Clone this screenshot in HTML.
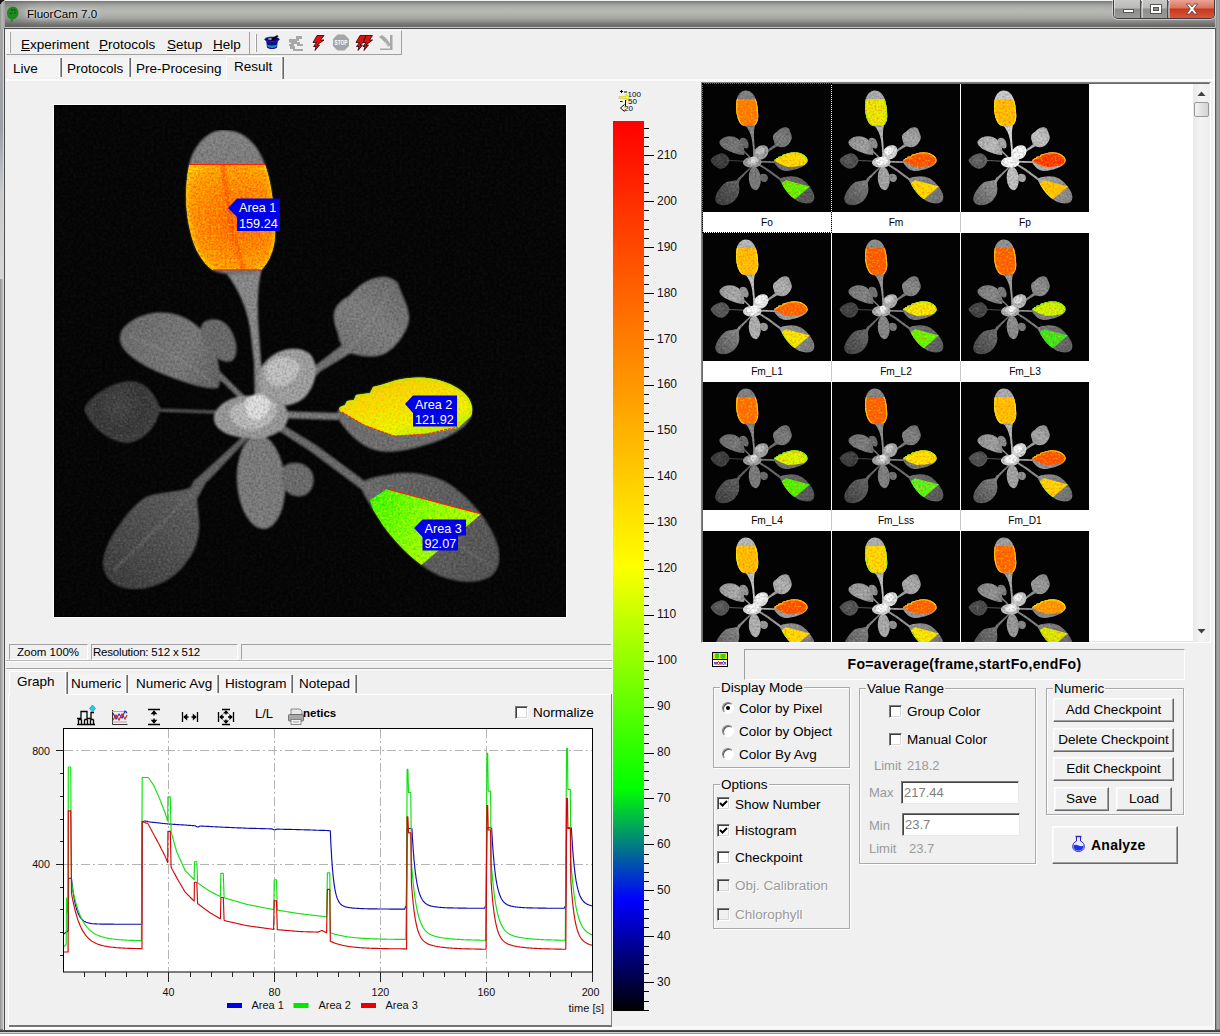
<!DOCTYPE html><html><head><meta charset="utf-8"><title>FluorCam 7.0</title><style>
*{box-sizing:border-box;margin:0;padding:0}
html,body{width:1220px;height:1036px;overflow:hidden;background:#f0f0f0}
body{font-family:"Liberation Sans",sans-serif;font-size:13px;color:#000;position:relative}
.a{position:absolute}
.t{position:absolute;white-space:nowrap;line-height:1}
u{text-decoration:underline;text-underline-offset:1px}
.grp{position:absolute;border:1px solid #a9a9a9;box-shadow:1px 1px 0 #fff, inset 1px 1px 0 #fff}
.leg{position:absolute;background:#f0f0f0;white-space:nowrap;line-height:1;padding:0 1px}
.btn{position:absolute;background:#f0f0f0;border:1px solid;border-color:#fff #696969 #696969 #fff;box-shadow:inset -1px -1px 0 #a0a0a0, inset 1px 1px 0 #f8f8f8;text-align:center;white-space:nowrap}
.cb{position:absolute;width:13px;height:13px;background:#fff;border:1px solid;border-color:#7a7a7a #fff #fff #7a7a7a;box-shadow:inset 1px 1px 0 #404040, inset -1px -1px 0 #d8d8d8}
.cb.dis{background:#f0f0f0}
.rb{position:absolute;width:12px;height:12px;border-radius:50%;background:#fff;border:1px solid;border-color:#808080 #fff #fff #808080;box-shadow:inset 1px 1px 0 #555}
.inp{position:absolute;background:#fff;border:1px solid;border-color:#7a7a7a #e8e8e8 #e8e8e8 #7a7a7a;box-shadow:inset 1px 1px 0 #404040}
.gray{color:#9a9a9a}
.sunk{position:absolute;border:1px solid;border-color:#a0a0a0 #fff #fff #a0a0a0}
.tabdiv{position:absolute;width:3px;background:linear-gradient(90deg,#fff 0 1px,#a0a0a0 1px 2px,#696969 2px 3px)}
</style></head><body>

<div class="a" style="left:0;top:0;width:1220px;height:1036px;background:#a3a5a4"></div>
<div class="a" style="left:0;top:0;width:1220px;height:29px;background:linear-gradient(180deg,#f6f6f6 0,#f0f0f0 .8px,#747573 1.200px,#8c8d8a 2.500px,#a2a49f 5px,#b0b2ad 8px,#b6b8b3 11px,#b0b1ad 15px,#a6a7a4 18px,#8e8f8d 21.500px,#777876 24px,#6a6b69 26.500px,#c4c4c4 27px,#c4c4c4 28px,#404040 28.200px)"></div>
<div class="a" style="left:0;top:1px;width:1220px;height:26px;background:linear-gradient(90deg,rgba(60,60,60,.28) 0,rgba(90,90,90,.0) 40px,rgba(255,255,255,0) 1100px,rgba(60,60,60,.12) 1220px)"></div>
<div class="a" style="left:0;top:0;width:5px;height:1034px;background:linear-gradient(90deg,#8d8f8e,#b9bbba 2px,#a2a4a3 4px)"></div>
<div class="a" style="left:1215px;top:0;width:5px;height:1034px;background:linear-gradient(90deg,#dcdcdc 0,#8a8c8b 1px,#a8aaa9 3px,#8e908f 5px)"></div>
<div class="a" style="left:0;top:1029px;width:1220px;height:7px;background:linear-gradient(180deg,#8a8a8a 0,#3c3c3c 2px,#3c3c3c 2.500px,#d4d4d4 3px,#d4d4d4 3.800px,#8c8e8d 4px,#9a9c9b 5px,#fff 5.200px,#fff 7px)"></div>
<div class="a" style="left:4px;top:28px;width:1212px;height:1003px;background:#f0f0f0;border:1px solid #4a4a4a;border-right-color:#5a5a5a;border-bottom-color:#4a4a4a"></div>
<div class="a" style="left:0;top:0;width:4px;height:4px;background:radial-gradient(circle at 6px 6px,transparent 5px,#111 6px)"></div>

<div class="a" style="left:1213px;top:29px;width:2px;height:1000px;background:#fafafa"></div><div class="a" style="left:612px;top:1026px;width:603px;height:3px;background:#f9f9f9"></div>
<div class="a" style="left:0;top:29px;width:3px;height:250px;background:linear-gradient(180deg,#a4a5a4 0,#9da1a6 100px,#b4b8bc 135px,#c6c8ca 160px,#d6d6d6 249px)"></div><div class="a" style="left:3px;top:29px;width:1px;height:1001px;background:#d8dadc"></div>
<div class="t" style="left:27px;top:8px;font-size:11.600px;color:#000;text-shadow:0 0 6px rgba(255,255,255,.9),0 0 3px rgba(255,255,255,.7)">FluorCam 7.0</div>
<svg class="a" style="left:6px;top:6px" width="14" height="17" viewBox="0 0 14 17"><path d="M7 0.5C3 1 0.8 4 1 8c.2 3 2 5 4 5.5L4.5 16l2-.3.5-2.2c3-.5 5.5-3 5.5-7C12.500 3 10 .8 7 .5z" fill="#1f8a1f"/><path d="M5 3l2 2M8 3l1.500 2M4 7l2 1M8 7.500l2-1" stroke="#0c5a0c" stroke-width="1.200" fill="none"/></svg>

<div class="a" style="left:1113px;top:0;width:102px;height:19px;border:1px solid #3c3c3c;border-top:none;border-radius:0 0 5px 5px;overflow:hidden;box-shadow:0 0 0 1px rgba(255,255,255,.45)">
 <div class="a" style="left:0;top:0;width:27px;height:18px;background:linear-gradient(180deg,#c9cac8 0,#b9bab8 8px,#8d8e8c 9px,#9a9b99 18px);border-right:1px solid #4a4a4a;box-shadow:inset 1px 0 0 rgba(255,255,255,.5)"></div>
 <div class="a" style="left:28px;top:0;width:26px;height:18px;background:linear-gradient(180deg,#c9cac8 0,#b9bab8 8px,#8d8e8c 9px,#9a9b99 18px);border-right:1px solid #4a4a4a;box-shadow:inset 1px 0 0 rgba(255,255,255,.5)"></div>
 <div class="a" style="left:55px;top:0;width:46px;height:18px;background:linear-gradient(180deg,#e9a392 0,#d9725c 8px,#c8361b 9px,#d8563a 18px);box-shadow:inset 1px 0 0 rgba(255,255,255,.4)"></div>
 <div class="a" style="left:9px;top:9px;width:11px;height:4px;background:#fff;border:1px solid #555"></div>
 <div class="a" style="left:36px;top:4px;width:12px;height:10px;background:#fff;border:1px solid #555"></div>
 <div class="a" style="left:39px;top:7px;width:6px;height:4px;background:#8d8e8c;border:1px solid #555"></div>
 <svg class="a" style="left:71px;top:3px" width="14" height="12" viewBox="0 0 14 12"><path d="M1.500 1h3.200L7 4l2.300-3h3.200L8.700 6l3.800 5H9.300L7 8l-2.300 3H1.500L5.300 6z" fill="#fff" stroke="#5a3a3a" stroke-width=".8"/></svg>
</div>


<div class="a" style="left:6px;top:30px;width:396px;height:25px;border:1px solid;border-color:#f8f8f8 #a0a0a0 #a0a0a0 #f8f8f8"></div>
<div class="a" style="left:249px;top:32px;width:1px;height:22px;background:#a0a0a0"></div>
<div class="a" style="left:9px;top:32px;width:2px;height:21px;border-left:1px solid #fff;border-right:1px solid #a0a0a0"></div>
<div class="a" style="left:255px;top:34px;width:2px;height:18px;border-left:1px solid #fff;border-right:1px solid #a0a0a0"></div>
<div class="t" style="left:21px;top:38px;font-size:13.500px"><u>E</u>xperiment</div>
<div class="t" style="left:99px;top:38px;font-size:13.500px"><u>P</u>rotocols</div>
<div class="t" style="left:167px;top:38px;font-size:13.500px"><u>S</u>etup</div>
<div class="t" style="left:213px;top:38px;font-size:13.500px"><u>H</u>elp</div>

<svg class="a" style="left:260px;top:32px" width="140" height="22" viewBox="260 31 140 22">
 <!-- blue magic hat -->
 <g>
  <path d="M266,38.500c3,-1.500 9,-1.500 12,0l-1,8c-2.500,2 -7.500,2 -10,0z" fill="#101080"/>
  <ellipse cx="272" cy="38.300" rx="7.300" ry="2.300" fill="#0a0a70" stroke="#2828b0" stroke-width=".8"/>
  <path d="M267.200,43.500c2.500,1.500 7,1.500 9.600,0l-.3,2.300c-2.500,1.500 -6.500,1.500 -9,0z" fill="#2090d0"/>
  <path d="M272,38.500l6,-4" stroke="#000" stroke-width="1.600"/>
  <path d="M277,34l2,-.8" stroke="#fff" stroke-width="1"/>
  <ellipse cx="270" cy="38" rx="2" ry=".8" fill="#fff" opacity=".8"/>
 </g>
 <!-- gray gear/robot -->
 <g fill="#a8a8a8">
  <path d="M296,35h6v3h-3v2h-3z"/>
  <path d="M289,38h8v3h3v2h-6v2h-5v-2h2v-2h-2z"/>
  <path d="M290,45h5v3h8v2h-10v-2h-3z"/>
  <path d="M297,43h6v2h-6z"/>
  <circle cx="291.500" cy="40" r="2.200"/>
 </g>
 <!-- red lightning -->
 <g>
  <path d="M317,34.500h7l-3.500,4.500h3.500l-7,5h2.500l-4.500,5.500l1,-4h-2.500l3,-4h-3.500z" fill="#e01010" stroke="#200000" stroke-width=".8"/>
 </g>
 <!-- stop sign -->
 <g>
  <path d="M337.500,33.500h7l4.500,4.500v7l-4.500,4.500h-7l-4.500,-4.500v-7z" fill="#a6a6a6"/>
  <text x="341" y="44.300" font-family="Liberation Sans, sans-serif" font-size="7" font-weight="bold" fill="#fff" text-anchor="middle" textLength="13" lengthAdjust="spacingAndGlyphs">STOP</text>
 </g>
 <!-- double lightning -->
 <g>
  <path d="M360,34.500h6.500l-3,4.500h3l-6.500,5h2.500l-4.500,5.500l1,-4h-2.500l3,-4h-3.500z" fill="#e01010" stroke="#200000" stroke-width=".8"/>
  <path d="M366.500,34.500h6l-3,4.500h3l-6.500,5h2.500l-4.500,5.500l1,-4h-2l3,-4h-3z" fill="#e01010" stroke="#200000" stroke-width=".8"/>
 </g>
 <!-- gray tool -->
 <g fill="#a8a8a8">
  <path d="M379,36l3,-2l4,3l-2,3z"/>
  <path d="M383,39l3,-2l5,7l-3,2z"/>
  <path d="M390,34h2.500v15h-2.500z"/>
  <path d="M380,47.500h12v1.500h-12z"/>
  <path d="M385,41l4,5" stroke="#d8d8d8" stroke-width="1"/>
 </g>
</svg>


<div class="a" style="left:6px;top:79px;width:1208px;height:2px;background:#fbfbfb"></div>
<div class="a" style="left:226px;top:56px;width:57px;height:24px;background:#f0f0f0;border-left:1px solid #fff;border-top:1px solid #fff"></div>
<div class="tabdiv" style="left:281px;top:57px;height:22px"></div>
<div class="a" style="left:8px;top:58px;width:218px;height:20px;background:#f4f4f4"></div>
<div class="tabdiv" style="left:59px;top:58px;height:19px"></div>
<div class="tabdiv" style="left:128px;top:58px;height:19px"></div>
<div class="t" style="left:13px;top:62px;font-size:13.500px">Live</div>
<div class="t" style="left:67px;top:62px;font-size:13.500px">Protocols</div>
<div class="t" style="left:136px;top:62px;font-size:13.500px">Pre-Procesing</div>
<div class="t" style="left:234px;top:60px;font-size:13.500px">Result</div>

<svg class="a" style="left:0;top:0" width="0" height="0">
<defs>
<filter id="soft" x="-5%" y="-5%" width="110%" height="110%"><feGaussianBlur stdDeviation="1.1"/></filter>
<filter id="grain" x="0" y="0" width="100%" height="100%" color-interpolation-filters="sRGB">
  <feTurbulence type="fractalNoise" baseFrequency="0.42" numOctaves="2" seed="3" result="n"/>
  <feColorMatrix in="n" type="matrix" values="0 0 0 0 0  0 0 0 0 0  0 0 0 0 0  0.45 0 0 0 -0.17" result="dark0"/>
  <feComposite in="dark0" in2="SourceAlpha" operator="in" result="dark"/>
  <feColorMatrix in="n" type="matrix" values="0 0 0 0 1  0 0 0 0 1  0 0 0 0 1  0 0.26 0 0 -0.105" result="lite0"/>
  <feComposite in="lite0" in2="SourceAlpha" operator="in" result="lite"/>
  <feMerge><feMergeNode in="SourceGraphic"/><feMergeNode in="dark"/><feMergeNode in="lite"/></feMerge>
</filter>
<filter id="gc1" x="0" y="0" width="100%" height="100%" color-interpolation-filters="sRGB">
  <feTurbulence type="fractalNoise" baseFrequency="0.45" numOctaves="2" seed="5" result="n"/>
  <feColorMatrix in="n" type="matrix" values="0 0 0 0 1.000  0 0 0 0 0.188  0 0 0 0 0.000  1.5 0 0 0 -0.6" result="d0"/>
  <feComposite in="d0" in2="SourceAlpha" operator="in" result="d"/>
  <feColorMatrix in="n" type="matrix" values="0 0 0 0 1.000  0 0 0 0 0.847  0 0 0 0 0.000  0 1.5 0 0 -0.62" result="l0"/>
  <feComposite in="l0" in2="SourceAlpha" operator="in" result="l"/>
  <feMerge><feMergeNode in="SourceGraphic"/><feMergeNode in="d"/><feMergeNode in="l"/></feMerge>
</filter>
<filter id="gc2" x="0" y="0" width="100%" height="100%" color-interpolation-filters="sRGB">
  <feTurbulence type="fractalNoise" baseFrequency="0.45" numOctaves="2" seed="6" result="n"/>
  <feColorMatrix in="n" type="matrix" values="0 0 0 0 1.000  0 0 0 0 0.627  0 0 0 0 0.000  1.5 0 0 0 -0.6" result="d0"/>
  <feComposite in="d0" in2="SourceAlpha" operator="in" result="d"/>
  <feColorMatrix in="n" type="matrix" values="0 0 0 0 0.784  0 0 0 0 1.000  0 0 0 0 0.000  0 1.5 0 0 -0.62" result="l0"/>
  <feComposite in="l0" in2="SourceAlpha" operator="in" result="l"/>
  <feMerge><feMergeNode in="SourceGraphic"/><feMergeNode in="d"/><feMergeNode in="l"/></feMerge>
</filter>
<filter id="gc3" x="0" y="0" width="100%" height="100%" color-interpolation-filters="sRGB">
  <feTurbulence type="fractalNoise" baseFrequency="0.45" numOctaves="2" seed="8" result="n"/>
  <feColorMatrix in="n" type="matrix" values="0 0 0 0 0.063  0 0 0 0 0.878  0 0 0 0 0.000  1.5 0 0 0 -0.6" result="d0"/>
  <feComposite in="d0" in2="SourceAlpha" operator="in" result="d"/>
  <feColorMatrix in="n" type="matrix" values="0 0 0 0 0.941  0 0 0 0 1.000  0 0 0 0 0.000  0 1.5 0 0 -0.62" result="l0"/>
  <feComposite in="l0" in2="SourceAlpha" operator="in" result="l"/>
  <feMerge><feMergeNode in="SourceGraphic"/><feMergeNode in="d"/><feMergeNode in="l"/></feMerge>
</filter>
<filter id="grainbg" x="0" y="0" width="100%" height="100%" color-interpolation-filters="sRGB">
  <feTurbulence type="fractalNoise" baseFrequency="0.35" numOctaves="2" seed="11" result="n"/>
  <feColorMatrix in="n" type="matrix" values="0 0 0 0 1  0 0 0 0 1  0 0 0 0 1  0 0.07 0 0 -0.026" result="lite"/>
  <feMerge><feMergeNode in="SourceGraphic"/><feMergeNode in="lite"/></feMerge>
</filter>
<path id="pL1" d="M170,26 C152,26 138,44 135,62 C131,82 131,106 136,126 C140,146 150,161 160,167 C175,172 195,172 206,167 C216,158 222,142 221,126 C220,100 217,76 210,58 C203,40 190,26 170,26 Z"/>
<path id="pA2" d="M282,311 L286,303 L291,301 L293,297 L300,296 L302,291 L309,290 L316,289 L319,283 L327,281 L341,276.500 C349,274.500 357,273.400 366,273.400 C390,274 416,286 418,303 C420,318 406,328 386,336 C366,344 340,350 325,347 C305,343 290,325 282,311 Z"/>
<path id="pA3" d="M305,380 C312,375 322,372 334,371 C350,367 372,368 392,378 C412,390 432,412 442,436 C448,452 446,466 436,473 C424,480 404,479 386,472 C364,462 342,440 328,420 C318,404 310,392 305,380 Z"/>
<clipPath id="cL1"><use href="#pL1"/></clipPath>
<clipPath id="cA2"><use href="#pA2"/></clipPath>
<clipPath id="cA3"><use href="#pA3"/></clipPath>
<clipPath id="kA1" clip-path="url(#cL1)"><rect x="120" y="60.500" width="120" height="105.500"/></clipPath>
<clipPath id="kA2" clip-path="url(#cA2)"><path d="M270,262 L430,262 L430,300 L404,324 L372,330 L340,332 L310,321 L286,307 Z"/></clipPath>
<clipPath id="kA3" clip-path="url(#cA3)"><path d="M316,396 L333,385 L427,410 L365,463 L340,446 L326,430 Z"/></clipPath>
<radialGradient id="gA1" cx="0.52" cy="0.5" r="0.62" fx="0.55" fy="0.55">
  <stop offset="0" stop-color="#ff5c00"/><stop offset="0.5" stop-color="#ff8a00"/><stop offset="0.8" stop-color="#ffaa00"/><stop offset="1" stop-color="#f4e800"/>
</radialGradient>
<linearGradient id="gA2" x1="0.2" y1="0" x2="0.8" y2="1">
  <stop offset="0" stop-color="#ffb400"/><stop offset="0.4" stop-color="#ffd800"/><stop offset="0.75" stop-color="#f4f800"/><stop offset="1" stop-color="#88ff00"/>
</linearGradient>
<linearGradient id="gA3" x1="0" y1="0.2" x2="1" y2="0.6">
  <stop offset="0" stop-color="#30f800"/><stop offset="0.45" stop-color="#88ff00"/><stop offset="1" stop-color="#d8ff00"/>
</linearGradient>

<linearGradient id="gBL" gradientUnits="userSpaceOnUse" x1="60" y1="475" x2="140" y2="392"><stop offset="0" stop-color="#3d3d3d"/><stop offset=".5" stop-color="#4f4f4f"/><stop offset="1" stop-color="#5e5e5e"/></linearGradient>
<radialGradient id="gLL" gradientUnits="userSpaceOnUse" cx="66" cy="302" r="40"><stop offset="0" stop-color="#464646"/><stop offset=".6" stop-color="#373737"/><stop offset="1" stop-color="#404040"/></radialGradient>
<linearGradient id="gUL" gradientUnits="userSpaceOnUse" x1="70" y1="225" x2="165" y2="280"><stop offset="0" stop-color="#6d6d6d"/><stop offset=".6" stop-color="#7a7a7a"/><stop offset="1" stop-color="#616161"/></linearGradient>
<linearGradient id="gUR" gradientUnits="userSpaceOnUse" x1="290" y1="250" x2="345" y2="180"><stop offset="0" stop-color="#737373"/><stop offset=".5" stop-color="#7f7f7f"/><stop offset="1" stop-color="#6c6c6c"/></linearGradient>
<linearGradient id="gA3g" gradientUnits="userSpaceOnUse" x1="310" y1="380" x2="445" y2="470"><stop offset="0" stop-color="#6c6c6c"/><stop offset=".5" stop-color="#5f5f5f"/><stop offset="1" stop-color="#545454"/></linearGradient>
<linearGradient id="gL1g" gradientUnits="userSpaceOnUse" x1="170" y1="26" x2="185" y2="170"><stop offset="0" stop-color="#858585"/><stop offset="1" stop-color="#737373"/></linearGradient>
<symbol id="plant" viewBox="0 0 512 512">
 <g filter="url(#soft)">
  <!-- petioles -->
  <path d="M168,164 C182,180 192,200 196,224 L200,258 L201,302 L211,302 L207,258 L204.500,224 C203,200 203.500,180 208,164 Z" fill="#8a8a8a"/>
  <path d="M100,304.500 L198,307.500 L198,311 L100,307.500 Z" fill="#555"/>
  <path d="M140,377 L192,329.500 L195.500,333 L154,377 Z" fill="#606060"/>
  <path d="M222,297 L262,261 L288,241 L297,249 L267,267 L227,303 Z" fill="#727272"/>
  <path d="M222,307 L284,309 L284,316 L222,314 Z" fill="#7a7a7a"/>
  <path d="M226,319 L262,341 L312,378 L307,385 L256,347 L222,325 Z" fill="#6c6c6c"/>
  <path d="M150,252 L200,301 L196,305 L147,257 Z" fill="#707070"/>
  <!-- outer leaves -->
  <use href="#pL1" fill="url(#gL1g)"/>
  <path d="M68,226 C80,210 104,205 124,211 C142,217 156,232 162,250 C166,264 168,280 164,284 C154,286 134,280 114,272 C92,264 72,252 67,240 C65,235 66,230 68,226 Z" fill="url(#gUL)"/>
  <path d="M150,218 C160,212 172,216 178,228 C184,240 184,252 178,257 C170,260 160,254 152,242 C146,232 145,222 150,218 Z" fill="#6a6a6a"/>
  <path d="M280,209 C282,200 288,196 295,192 C304,182 314,174 327,173 C334,172 340,175 344,179 C347,190 354,200 355,211 C356,219 352,226 349,231 C344,240 338,245 332,249 C326,252 320,253 313,252.500 C306,252 300,250 296,249 L289,243 C286,238 284,234 284,230 C281,222 279,215 280,209 Z" fill="url(#gUR)"/>
  <path d="M30,305 C36,292 54,280 74,277 C90,276 100,288 106,304 C104,320 92,336 74,339 C54,338 36,322 30,305 Z" fill="url(#gLL)"/>
  <path d="M154,375 L143,395 C144,408 146,418 145,426 C144,440 139,450 133,457 C125,470 112,478 100,482 C88,486 74,487 62,481 C52,475 48,466 49,456 C52,440 60,428 66,420 C74,408 84,398 92,393 C105,388 124,388 136,384 L141,375 Z" fill="url(#gBL)"/>
  <ellipse cx="207" cy="378" rx="24" ry="47" fill="#7c7c7c" transform="rotate(-4 207 378)"/>
  <path d="M230,362 C238,356 252,358 258,368 C262,378 258,390 248,392 C238,394 230,388 228,378 C227,372 228,366 230,362 Z" fill="#6c6c6c"/>
  <use href="#pA2" fill="#707070"/>
  <use href="#pA3" fill="url(#gA3g)"/>
  <path d="M60,466 L138,390" stroke="#7a7a7a" stroke-width="2" opacity=".55" fill="none"/>
  <path d="M207,335 L207,420" stroke="#8c8c8c" stroke-width="1.600" opacity=".5" fill="none"/>
  <path d="M75,232 C110,245 140,262 162,282" stroke="#999" stroke-width="1.600" opacity=".5" fill="none"/>
  <path d="M288,252 C305,235 325,210 335,185" stroke="#9a9a9a" stroke-width="1.600" opacity=".45" fill="none"/>
  <path d="M310,382 C350,405 400,440 438,462" stroke="#808080" stroke-width="1.800" opacity=".45" fill="none"/>
  <!-- centre -->
  <path d="M208,262 C220,244 244,240 256,250 C266,262 262,282 250,294 C238,304 218,304 210,296 C204,288 204,272 208,262 Z" fill="#a2a2a2"/>
  <path d="M160,312 C164,298 182,290 200,292 C220,290 236,300 234,314 C232,328 214,336 196,334 C176,334 158,326 160,312 Z" fill="#9a9a9a"/>
  <path d="M212,262 C222,250 240,250 246,262 C244,276 232,284 220,282 C212,278 210,270 212,262 Z" fill="#c4c4c4"/>
  <path d="M176,306 C184,296 206,292 222,298 C226,310 216,324 200,326 C186,326 174,318 176,306 Z" fill="#bdbdbd"/>
  <path d="M192,296 C198,288 212,288 216,298 C216,310 206,318 198,316 C192,312 190,302 192,296 Z" fill="#e2e2e2"/>
 </g>
</symbol>

<symbol id="areas" viewBox="0 0 512 512">
  <rect x="120" y="60.500" width="120" height="105.500" clip-path="url(#cL1)" fill="var(--a1)"/>
  <path d="M270,262 L430,262 L430,300 L404,324 L372,330 L340,332 L310,321 L286,307 Z" clip-path="url(#cA2)" fill="var(--a2)"/>
  <path d="M316,396 L333,385 L427,410 L365,463 L340,446 L326,430 Z" clip-path="url(#cA3)" fill="var(--a3)"/>
  <use href="#pL1" fill="none" stroke="var(--s1)" stroke-width="9" clip-path="url(#kA1)"/>
  <use href="#pA2" fill="none" stroke="var(--s2)" stroke-width="8" clip-path="url(#kA2)"/>
  <use href="#pA3" fill="none" stroke="var(--s3)" stroke-width="8" clip-path="url(#kA3)"/>
</symbol>
</defs>
</svg>

<div class="a" style="left:53px;top:104px;width:514px;height:514px;border:1px solid #fff"></div>
<svg class="a" style="left:54px;top:104px" width="512" height="513" viewBox="0 0 512 513">
 <rect x="0" y="1" width="512" height="512" fill="#000"/>
 <rect x="1" y="2" width="510" height="510" fill="#040404" filter="url(#grainbg)"/>
 <g filter="url(#grain)"><use href="#plant" width="512" height="512"/></g>
 <g filter="url(#gc1)"><rect x="120" y="60.500" width="120" height="105.500" clip-path="url(#cL1)" fill="url(#gA1)"/><g clip-path="url(#kA1)"><use href="#pL1" fill="none" stroke="#f6e400" stroke-width="5" opacity=".75" filter="url(#soft)"/><path d="M168,58 C172,90 180,130 190,168" stroke="#ff3800" stroke-width="5" opacity=".55" fill="none" filter="url(#soft)"/><path d="M175,90 C180,120 186,145 193,168" stroke="#ffa000" stroke-width="1.600" opacity=".6" fill="none"/></g></g>
 <g filter="url(#gc2)"><path d="M270,262 L430,262 L430,300 L404,324 L372,330 L340,332 L310,321 L286,307 Z" clip-path="url(#cA2)" fill="url(#gA2)"/><g clip-path="url(#kA2)"><use href="#pA2" fill="none" stroke="#a0ff00" stroke-width="5" opacity=".6" filter="url(#soft)"/></g></g>
 <g filter="url(#gc3)"><path d="M316,396 L333,385 L427,410 L365,463 L340,446 L326,430 Z" clip-path="url(#cA3)" fill="url(#gA3)"/></g>
 <!-- red outlines -->
 <path d="M135,60.500 L211,60.500 M159,165.800 L207,165.800" stroke="#ff2000" stroke-width="1" fill="none"/>
 <path d="M288,308 L310,321 L340,332 L372,330 L404,323" stroke="#ff2000" stroke-width="1" fill="none" stroke-dasharray="3 1"/>
 <path d="M333,385 L427,410" stroke="#ff2000" stroke-width="1.200" fill="none"/>
 <!-- labels -->
 <g font-family="Liberation Sans, sans-serif" font-size="12.700" fill="#fff">
  <path d="M174,104 L183,94.500 L226,94.500 L226,127 L183,127 L183,113 Z" fill="#0000e8"/>
  <text x="185" y="107.500">Area 1</text><text x="185" y="123.500">159.24</text>
  <path d="M351,300 L359,291.500 L403,291.500 L403,322.500 L359,322.500 L359,309 Z" fill="#0000e8"/>
  <text x="361" y="304.500">Area 2</text><text x="361" y="320">121.92</text>
  <path d="M360,424 L368.500,415.500 L412,415.500 L412,431.500 L404,431.500 L404,446.500 L368.500,446.500 L368.500,433 Z" fill="#0000e8"/>
  <text x="370.500" y="428.500">Area 3</text><text x="370.500" y="444">92.07</text>
 </g>
</svg>

<!--STATUS-->

<div class="a" style="left:6px;top:660px;width:606px;height:1px;background:#b4b4b4"></div>
<div class="a" style="left:6px;top:661px;width:606px;height:1px;background:#fff"></div>
<div class="sunk" style="left:9px;top:644px;width:79px;height:16px"></div>
<div class="sunk" style="left:91px;top:644px;width:147px;height:16px"></div>
<div class="sunk" style="left:241px;top:644px;width:370px;height:16px;border-right:none"></div>
<div class="t" style="left:17px;top:647px;font-size:11.500px;letter-spacing:0">Zoom 100%</div>
<div class="t" style="left:93px;top:647px;font-size:11.500px;letter-spacing:-.2px">Resolution: 512 x 512</div>
<div class="a" style="left:6px;top:668px;width:606px;height:1px;background:#a0a0a0"></div>
<div class="a" style="left:6px;top:669px;width:606px;height:1px;background:#fff"></div>


<div class="a" style="left:9px;top:671px;width:58px;height:25px;border-left:1px solid #fff;border-top:1px solid #fff"></div>
<div class="tabdiv" style="left:65px;top:672px;height:22px"></div>
<div class="a" style="left:68px;top:674px;width:288px;height:20px;background:#f4f4f4"></div>
<div class="tabdiv" style="left:125px;top:675px;height:18px"></div>
<div class="tabdiv" style="left:216px;top:675px;height:18px"></div>
<div class="tabdiv" style="left:290px;top:675px;height:18px"></div>
<div class="tabdiv" style="left:354px;top:675px;height:18px"></div>
<div class="a" style="left:67px;top:694px;width:545px;height:1px;background:#fff"></div>
<div class="a" style="left:611px;top:694px;width:1px;height:333px;background:#808080"></div>
<div class="a" style="left:9px;top:1025px;width:603px;height:1.500px;background:#747474"></div>
<div class="a" style="left:9px;top:1027px;width:604px;height:2px;background:#fff"></div>
<div class="a" style="left:8px;top:695px;width:1px;height:333px;background:#fff"></div>
<div class="t" style="left:17px;top:675px;font-size:13.500px">Graph</div>
<div class="t" style="left:71px;top:677px;font-size:13.500px">Numeric</div>
<div class="t" style="left:136px;top:677px;font-size:13.500px">Numeric Avg</div>
<div class="t" style="left:225px;top:677px;font-size:13.500px">Histogram</div>
<div class="t" style="left:299px;top:677px;font-size:13.500px">Notepad</div>


<svg class="a" style="left:70px;top:702px" width="280" height="26" viewBox="70 702 280 26">
 <g fill="none" stroke="#000" stroke-width="1.300">
  <path d="M77,718.500h4v-7h6v7h4v-6h3"/>
  <path d="M78.500,724.500v-5M81.500,724.500v-5M84.500,724.500v-5M87.500,724.500v-5M90.500,724.500v-5M93.500,724.500v-5M77,724.500h18M78.500,719.500h3M84.500,719.500h3M90.500,719.500h3"/>
  <path d="M148,709.500h12M148,724.500h12M154,711v4.500M154,718.500v4.500"/>
  <path d="M182.500,712v10M197.500,712v10M184,717h4.500M191.500,717h4.500"/>
  <path d="M218.500,712v10M233.500,712v10M222,709.500h8M222,724.500h8M220,717h4M228,717h4M226,711v3.500M226,719.500v3.500"/>
 </g>
 <g fill="#000">
  <path d="M154,710.200l-3.400,4h6.800zM154,723.800l-3.400,-4h6.800z"/>
  <path d="M183.200,717l4,-3.400v6.800zM196.800,717l-4,-3.400v6.800z"/>
  <path d="M219.200,717l3.400,-3v6zM232.800,717l-3.400,-3v6zM226,710.200l-3,3.400h6zM226,723.800l-3,-3.400h6z"/>
 </g>
 <path d="M92.500,705l3,3.500l-3,3.500l-3,-3.500z" fill="#20d0f0" stroke="#1090c0" stroke-width=".7"/>
 <g>
  <path d="M112.500,710v14.500h15" fill="none" stroke="#333" stroke-width="1"/>
  <path d="M112,711.500h15M112,722h15" stroke="#999" stroke-width=".8"/>
  <path d="M113,713l3,6l3,-5l3,4l3,-7l2,2" fill="none" stroke="#2030d0" stroke-width="1.200"/>
  <path d="M113,720l3,-5l3,5l3,-6l3,5l2,-4" fill="none" stroke="#e02020" stroke-width="1.200"/>
 </g>
 <g>
  <path d="M291,709h9l2,2v4h-11z" fill="#e8e8e8" stroke="#707070" stroke-width=".8"/>
  <rect x="288.500" y="714.500" width="15" height="6.500" rx="1" fill="#a8a8a8" stroke="#606060" stroke-width=".8"/>
  <rect x="291" y="719.500" width="10" height="5" fill="#f4f4f4" stroke="#707070" stroke-width=".8"/>
  <path d="M293,722h6" stroke="#888" stroke-width=".8"/>
 </g>
</svg>
<div class="t" style="left:255px;top:707px;font-size:13px">L/L</div>
<div class="t" style="left:303px;top:708px;font-size:11.500px;font-weight:bold">netics</div>
<div class="cb" style="left:515px;top:706px"></div>
<div class="t" style="left:533px;top:706px;font-size:13.500px">Normalize</div>

<svg class="a" style="left:0;top:695px" width="612" height="335" viewBox="0 695 612 335"><rect x="63.500" y="728.500" width="529" height="243.500" fill="#fff" stroke="#000" stroke-width="1"/><path d="M168.5,729V971M274.5,729V971M380.5,729V971M486.5,729V971M64,750.5H592M64,864.5H592" stroke="#b4b4b4" stroke-width="1" stroke-dasharray="9 3 2 3" fill="none" shape-rendering="crispEdges"/><path d="M84.5,972v5M105.5,972v5M126.5,972v5M147.5,972v5M168.5,972v10M190.5,972v5M211.5,972v5M232.5,972v5M253.5,972v5M274.5,972v10M296.5,972v5M317.5,972v5M338.5,972v5M359.5,972v5M380.5,972v10M402.5,972v5M423.5,972v5M444.5,972v5M465.5,972v5M486.5,972v10M508.5,972v5M529.5,972v5M550.5,972v5M571.5,972v5M592.5,972v10M63,955.5h-3M63,932.5h-3M63,909.5h-3M63,887.5h-3M63,864.5h-7M63,841.5h-3M63,819.5h-3M63,796.5h-3M63,773.5h-3M63,750.5h-7" stroke="#222" stroke-width="1" fill="none" shape-rendering="crispEdges"/><clipPath id="plotclip"><rect x="64" y="729" width="528" height="242"/></clipPath><g clip-path="url(#plotclip)" fill="none" stroke-width="1.150" stroke-linejoin="round"><path d="M62.5,934.9L63.0,934.5L63.6,934.1L64.1,933.7L64.6,933.3L65.1,933.0L65.7,932.6L66.2,932.2L66.7,931.8L67.3,931.4L67.8,931.0L68.3,930.6L68.6,878.2L69.4,878.2L70.2,878.2L71.0,878.2L71.5,878.8L71.8,881.3L72.0,883.7L72.3,885.9L72.6,888.0L72.8,890.0L73.1,891.9L73.4,893.7L73.6,895.4L73.9,897.0L74.2,898.5L74.4,899.9L74.7,901.3L75.0,902.6L75.2,903.8L75.5,904.9L75.7,906.0L76.0,907.0L76.3,907.9L76.5,908.8L76.8,909.7L77.1,910.5L77.3,911.2L77.6,912.0L77.9,912.6L78.1,913.3L78.4,913.9L78.7,914.4L78.9,915.0L79.2,915.5L79.5,916.0L79.7,916.4L80.0,916.9L80.2,917.3L80.5,917.6L80.8,918.0L81.0,918.4L81.6,919.0L82.1,919.5L82.6,920.0L83.2,920.5L83.7,920.9L84.2,921.2L84.8,921.5L85.3,921.8L85.8,922.1L86.3,922.3L86.9,922.5L87.4,922.7L87.9,922.8L88.5,923.0L89.0,923.1L89.5,923.2L90.0,923.3L90.6,923.4L91.1,923.5L91.6,923.6L92.4,923.7L93.2,923.7L94.0,923.8L94.8,923.9L95.6,923.9L96.4,923.9L97.2,924.0L98.0,924.0L98.8,924.0L99.6,924.0L100.4,924.1L101.2,924.1L102.0,924.1L102.8,924.1L103.6,924.1L104.4,924.1L105.1,924.1L105.9,924.1L106.7,924.1L107.5,924.1L108.3,924.1L109.1,924.1L109.9,924.1L110.7,924.1L111.5,924.1L112.3,924.1L113.1,924.1L113.9,924.2L114.7,924.2L115.5,924.2L116.3,924.2L117.1,924.2L117.9,924.2L118.7,924.2L119.5,924.2L120.2,924.2L121.0,924.2L121.8,924.2L122.6,924.2L123.4,924.2L124.2,924.2L125.0,924.2L125.8,924.2L126.6,924.2L127.4,924.2L128.2,924.2L129.0,924.2L129.8,924.2L130.6,924.2L131.4,924.2L132.2,924.2L133.0,924.2L133.8,924.2L134.6,924.2L135.3,924.2L136.1,924.2L136.9,924.2L137.7,924.2L138.5,924.2L139.3,924.2L140.1,924.2L140.9,924.2L141.7,924.2L142.2,822.0L142.8,821.8L143.3,821.5L143.8,821.2L144.4,821.0L145.1,821.0L145.7,821.1L146.2,821.2L146.7,821.3L147.3,821.4L147.8,821.6L148.3,821.7L148.9,821.8L149.4,821.9L149.9,822.0L150.7,822.1L151.5,822.2L152.3,822.3L153.1,822.3L153.9,822.4L154.7,822.5L155.5,822.6L156.3,822.7L157.1,822.8L157.9,822.9L158.7,822.9L159.5,823.0L160.2,823.1L161.0,823.2L161.8,823.3L162.6,823.4L163.4,823.5L164.2,823.5L165.0,823.6L165.8,823.7L166.6,823.8L167.4,823.9L168.2,824.0L169.0,824.0L169.8,824.1L170.6,824.1L171.4,824.2L172.2,824.2L173.0,824.3L173.8,824.3L174.6,824.4L175.3,824.4L176.1,824.5L176.9,824.5L177.7,824.6L178.5,824.6L179.3,824.7L180.1,824.7L180.9,824.8L181.7,824.8L182.5,824.9L183.3,824.9L184.1,825.0L184.9,825.0L185.7,825.1L186.5,825.1L187.3,825.2L188.1,825.3L188.9,825.3L189.7,825.4L190.4,825.4L191.2,825.5L192.0,825.5L192.8,825.6L193.6,825.6L194.4,825.7L195.2,825.8L195.7,826.1L196.3,826.4L196.8,826.7L197.3,827.0L198.1,826.9L198.7,826.7L199.2,826.4L199.7,826.2L200.2,826.0L201.0,826.0L201.8,826.1L202.6,826.1L203.4,826.1L204.2,826.2L205.0,826.2L205.8,826.3L206.6,826.3L207.4,826.4L208.2,826.4L209.0,826.4L209.8,826.5L210.6,826.5L211.4,826.6L212.2,826.6L213.0,826.7L213.8,826.7L214.6,826.7L215.3,826.8L216.1,826.8L216.9,826.9L217.7,826.9L218.5,827.0L219.3,827.0L220.1,827.0L220.9,827.1L221.7,827.1L222.5,827.2L223.3,827.2L224.1,827.2L224.9,827.3L225.7,827.3L226.5,827.3L227.3,827.4L228.1,827.4L228.9,827.4L229.7,827.5L230.4,827.5L231.2,827.5L232.0,827.6L232.8,827.6L233.6,827.6L234.4,827.7L235.2,827.7L236.0,827.7L236.8,827.8L237.6,827.8L238.4,827.8L239.2,827.9L240.0,827.9L240.8,827.9L241.6,828.0L242.4,828.0L243.2,828.0L244.0,828.1L244.8,828.1L245.5,828.1L246.3,828.2L247.1,828.2L247.9,828.2L248.7,828.3L249.5,828.3L250.3,828.3L251.1,828.3L251.9,828.3L252.7,828.4L253.5,828.4L254.3,828.4L255.1,828.4L255.9,828.4L256.7,828.5L257.5,828.5L258.3,828.5L259.1,828.5L259.9,828.5L260.6,828.6L261.4,828.6L262.2,828.6L263.0,828.6L263.8,828.6L264.6,828.6L265.4,828.7L266.2,828.7L267.0,828.7L267.8,828.7L268.6,828.7L269.4,828.8L270.2,828.8L271.0,828.8L271.8,828.8L272.3,829.0L272.8,829.3L273.4,829.5L273.9,829.7L274.4,830.0L274.9,829.8L275.5,829.6L276.0,829.4L276.5,829.3L277.1,829.1L277.9,829.1L278.7,829.1L279.5,829.2L280.2,829.2L281.0,829.2L281.8,829.2L282.6,829.2L283.4,829.3L284.2,829.3L285.0,829.3L285.8,829.3L286.6,829.3L287.4,829.3L288.2,829.4L289.0,829.4L289.8,829.4L290.6,829.4L291.4,829.4L292.2,829.5L293.0,829.5L293.8,829.5L294.6,829.5L295.3,829.5L296.1,829.6L296.9,829.6L297.7,829.6L298.5,829.6L299.3,829.6L300.1,829.6L300.9,829.7L301.7,829.7L302.5,829.7L303.3,829.7L304.1,829.8L304.9,829.8L305.7,829.8L306.5,829.8L307.3,829.9L308.1,829.9L308.9,829.9L309.7,829.9L310.4,830.0L311.2,830.0L312.0,830.0L312.8,830.0L313.6,830.1L314.4,830.1L315.2,830.1L316.0,830.2L316.8,830.2L317.6,830.2L318.4,830.2L319.2,830.3L320.0,830.3L320.8,830.3L321.6,830.3L322.4,830.4L323.2,830.4L324.0,830.4L324.8,830.4L325.5,830.5L326.3,830.5L327.1,830.5L327.9,830.6L328.7,830.6L329.5,830.7L330.3,830.8L330.6,837.0L330.8,842.6L331.1,847.8L331.4,852.6L331.6,857.0L331.9,861.0L332.2,864.7L332.4,868.1L332.7,871.2L333.0,874.0L333.2,876.7L333.5,879.1L333.8,881.3L334.0,883.3L334.3,885.2L334.6,886.9L334.8,888.5L335.1,890.0L335.3,891.3L335.6,892.6L335.9,893.7L336.1,894.7L336.4,895.7L336.7,896.6L336.9,897.4L337.2,898.2L337.5,898.9L337.7,899.5L338.0,900.1L338.3,900.7L338.5,901.2L338.8,901.6L339.1,902.1L339.3,902.5L339.6,902.8L339.9,903.2L340.4,903.8L340.9,904.3L341.4,904.8L342.0,905.2L342.5,905.5L343.0,905.8L343.6,906.1L344.1,906.3L344.6,906.5L345.1,906.7L345.7,906.9L346.2,907.0L346.7,907.1L347.3,907.3L347.8,907.4L348.3,907.5L348.9,907.6L349.4,907.6L349.9,907.7L350.7,907.8L351.5,907.9L352.3,908.0L353.1,908.1L353.9,908.1L354.7,908.2L355.5,908.2L356.3,908.3L357.1,908.4L357.9,908.4L358.7,908.4L359.5,908.5L360.2,908.5L361.0,908.6L361.8,908.6L362.6,908.6L363.4,908.6L364.2,908.7L365.0,908.7L365.8,908.7L366.6,908.7L367.4,908.8L368.2,908.8L369.0,908.8L369.8,908.8L370.6,908.8L371.4,908.9L372.2,908.9L373.0,908.9L373.8,908.9L374.6,908.9L375.3,908.9L376.1,908.9L376.9,908.9L377.7,909.0L378.5,909.0L379.3,909.0L380.1,909.0L380.9,909.0L381.7,909.0L382.5,909.0L383.3,909.0L384.1,909.0L384.9,909.0L385.7,909.0L386.5,909.0L387.3,909.0L388.1,909.0L388.9,909.0L389.7,909.1L390.4,909.1L391.2,909.1L392.0,909.1L392.8,909.1L393.6,909.1L394.4,909.1L395.2,909.1L396.0,909.1L396.8,909.1L397.6,909.1L398.4,909.1L399.2,909.1L400.0,909.1L400.8,909.1L401.6,909.1L402.4,909.1L403.2,909.1L404.0,909.1L404.8,909.1L405.5,906.6L406.3,906.6L407.1,828.5L407.9,828.5L408.7,828.5L409.5,828.5L410.3,828.5L411.1,828.5L411.9,828.5L412.2,833.4L412.4,837.9L412.7,842.1L413.0,846.1L413.2,849.8L413.5,853.3L413.8,856.5L414.0,859.6L414.3,862.5L414.6,865.2L414.8,867.7L415.1,870.0L415.3,872.3L415.6,874.3L415.9,876.3L416.1,878.1L416.4,879.8L416.7,881.4L416.9,882.9L417.2,884.4L417.5,885.7L417.7,886.9L418.0,888.1L418.3,889.2L418.5,890.2L418.8,891.2L419.1,892.1L419.3,893.0L419.6,893.8L419.9,894.5L420.1,895.3L420.4,895.9L420.6,896.5L420.9,897.1L421.2,897.7L421.4,898.2L421.7,898.7L422.0,899.2L422.2,899.6L422.5,900.0L422.8,900.4L423.0,900.8L423.3,901.1L423.8,901.8L424.4,902.3L424.9,902.8L425.4,903.3L425.9,903.7L426.5,904.0L427.0,904.4L427.5,904.7L428.1,904.9L428.6,905.2L429.1,905.4L429.7,905.6L430.2,905.8L430.7,905.9L431.2,906.1L431.8,906.2L432.3,906.3L432.8,906.4L433.4,906.5L433.9,906.6L434.4,906.7L434.9,906.8L435.5,906.9L436.0,906.9L436.8,907.0L437.6,907.1L438.4,907.2L439.2,907.3L440.0,907.4L440.8,907.4L441.6,907.5L442.4,907.5L443.2,907.6L444.0,907.6L444.8,907.7L445.5,907.7L446.3,907.7L447.1,907.8L447.9,907.8L448.7,907.8L449.5,907.8L450.3,907.9L451.1,907.9L451.9,907.9L452.7,907.9L453.5,908.0L454.3,908.0L455.1,908.0L455.9,908.0L456.7,908.0L457.5,908.0L458.3,908.1L459.1,908.1L459.9,908.1L460.6,908.1L461.4,908.1L462.2,908.1L463.0,908.1L463.8,908.1L464.6,908.1L465.4,908.1L466.2,908.1L467.0,908.2L467.8,908.2L468.6,908.2L469.4,908.2L470.2,908.2L471.0,908.2L471.8,908.2L472.6,908.2L473.4,908.2L474.2,908.2L474.9,908.2L475.7,908.2L476.5,908.2L477.3,908.2L478.1,908.2L478.9,908.2L479.7,908.2L480.5,908.2L481.3,908.2L482.1,908.2L482.9,908.2L483.7,908.2L484.5,908.2L485.3,906.6L486.1,906.6L486.9,827.7L487.7,827.7L488.5,827.7L489.3,827.7L490.0,827.7L490.8,827.7L491.6,828.5L491.9,833.4L492.2,837.9L492.4,842.1L492.7,846.1L493.0,849.8L493.2,853.3L493.5,856.5L493.8,859.6L494.0,862.5L494.3,865.2L494.6,867.7L494.8,870.0L495.1,872.3L495.3,874.3L495.6,876.3L495.9,878.1L496.1,879.8L496.4,881.4L496.7,882.9L496.9,884.4L497.2,885.7L497.5,886.9L497.7,888.1L498.0,889.2L498.3,890.2L498.5,891.2L498.8,892.1L499.1,893.0L499.3,893.8L499.6,894.5L499.8,895.3L500.1,895.9L500.4,896.5L500.6,897.1L500.9,897.7L501.2,898.2L501.4,898.7L501.7,899.2L502.0,899.6L502.2,900.0L502.5,900.4L502.8,900.8L503.0,901.1L503.6,901.8L504.1,902.3L504.6,902.8L505.1,903.3L505.7,903.7L506.2,904.0L506.7,904.4L507.3,904.7L507.8,904.9L508.3,905.2L508.9,905.4L509.4,905.6L509.9,905.8L510.4,905.9L511.0,906.1L511.5,906.2L512.0,906.3L512.6,906.4L513.1,906.5L513.6,906.6L514.2,906.7L514.7,906.8L515.2,906.9L515.7,906.9L516.5,907.0L517.3,907.1L518.1,907.2L518.9,907.3L519.7,907.4L520.5,907.4L521.3,907.5L522.1,907.5L522.9,907.6L523.7,907.6L524.5,907.7L525.3,907.7L526.1,907.7L526.9,907.8L527.7,907.8L528.5,907.8L529.3,907.8L530.0,907.9L530.8,907.9L531.6,907.9L532.4,907.9L533.2,908.0L534.0,908.0L534.8,908.0L535.6,908.0L536.4,908.0L537.2,908.0L538.0,908.1L538.8,908.1L539.6,908.1L540.4,908.1L541.2,908.1L542.0,908.1L542.8,908.1L543.6,908.1L544.4,908.1L545.1,908.1L545.9,908.1L546.7,908.2L547.5,908.2L548.3,908.2L549.1,908.2L549.9,908.2L550.7,908.2L551.5,908.2L552.3,908.2L553.1,908.2L553.9,908.2L554.7,908.2L555.5,908.2L556.3,908.2L557.1,908.2L557.9,908.2L558.7,908.2L559.5,908.2L560.2,908.2L561.0,908.2L561.8,908.2L562.6,908.2L563.4,908.2L564.2,908.2L565.0,906.6L565.8,906.6L566.6,827.7L567.4,827.7L568.2,827.7L569.0,827.7L569.8,827.7L570.6,827.7L571.4,828.0L571.6,832.8L571.9,837.3L572.2,841.5L572.4,845.5L572.7,849.2L573.0,852.7L573.2,856.0L573.5,859.0L573.8,861.9L574.0,864.6L574.3,867.1L574.6,869.5L574.8,871.7L575.1,873.8L575.3,875.7L575.6,877.5L575.9,879.3L576.1,880.9L576.4,882.4L576.7,883.8L576.9,885.1L577.2,886.4L577.5,887.5L577.7,888.6L578.0,889.7L578.3,890.6L578.5,891.6L578.8,892.4L579.1,893.2L579.3,894.0L579.6,894.7L579.8,895.4L580.1,896.0L580.4,896.6L580.6,897.1L580.9,897.7L581.2,898.1L581.4,898.6L581.7,899.1L582.0,899.5L582.2,899.9L582.5,900.2L582.8,900.6L583.3,901.2L583.8,901.8L584.4,902.3L584.9,902.7L585.4,903.1L585.9,903.5L586.5,903.8L587.0,904.1L587.5,904.4L588.1,904.6L588.6,904.8L589.1,905.0L589.7,905.2L590.2,905.3L590.7,905.5L591.2,905.6L591.8,905.7L592.3,905.9" stroke="#0c0cb0"/><path d="M62.5,947.7L63.0,947.3L63.6,946.8L64.1,946.3L64.6,945.9L65.1,945.4L65.7,945.0L66.2,944.5L66.5,898.0L67.3,912.2L68.1,912.2L68.3,767.0L69.1,767.0L69.9,767.0L70.7,767.0L71.5,883.0L71.8,884.5L72.0,885.9L72.3,887.3L72.6,888.7L72.8,890.0L73.1,891.3L73.4,892.5L73.6,893.7L73.9,894.9L74.2,896.1L74.4,897.2L74.7,898.3L75.0,899.4L75.2,900.4L75.5,901.4L75.7,902.4L76.0,903.3L76.3,904.3L76.5,905.2L76.8,906.1L77.1,906.9L77.3,907.8L77.6,908.6L77.9,909.4L78.1,910.2L78.4,910.9L78.7,911.6L78.9,912.4L79.2,913.0L79.5,913.7L79.7,914.4L80.0,915.0L80.2,915.7L80.5,916.3L80.8,916.9L81.0,917.4L81.3,918.0L81.6,918.6L81.8,919.1L82.1,919.6L82.4,920.1L82.6,920.6L82.9,921.1L83.2,921.6L83.4,922.0L83.7,922.5L84.0,922.9L84.2,923.3L84.5,923.7L84.8,924.1L85.0,924.5L85.3,924.9L85.5,925.3L85.8,925.6L86.1,926.0L86.3,926.3L86.6,926.7L87.1,927.3L87.7,927.9L88.2,928.5L88.7,929.1L89.3,929.6L89.8,930.1L90.3,930.6L90.8,931.0L91.4,931.5L91.9,931.9L92.4,932.3L93.0,932.6L93.5,933.0L94.0,933.3L94.6,933.7L95.1,934.0L95.6,934.2L96.1,934.5L96.7,934.8L97.2,935.0L97.7,935.3L98.3,935.5L98.8,935.7L99.3,935.9L99.9,936.1L100.4,936.3L100.9,936.5L101.4,936.7L102.0,936.8L102.5,937.0L103.0,937.1L103.6,937.3L104.1,937.4L104.6,937.6L105.1,937.7L105.7,937.8L106.2,937.9L106.7,938.0L107.3,938.1L107.8,938.2L108.3,938.3L108.9,938.4L109.4,938.5L109.9,938.6L110.4,938.7L111.0,938.8L111.5,938.8L112.0,938.9L112.8,939.0L113.6,939.1L114.4,939.2L115.2,939.3L116.0,939.4L116.8,939.5L117.6,939.5L118.4,939.6L119.2,939.7L120.0,939.7L120.8,939.8L121.6,939.8L122.4,939.9L123.2,939.9L124.0,940.0L124.8,940.0L125.5,940.1L126.3,940.1L127.1,940.2L127.9,940.2L128.7,940.2L129.5,940.3L130.3,940.3L131.1,940.3L131.9,940.4L132.7,940.4L133.5,940.4L134.3,940.4L135.1,940.5L135.9,940.5L136.7,940.5L137.5,940.5L138.3,940.6L139.1,940.6L139.9,940.6L140.6,940.6L141.4,940.6L142.2,777.5L143.0,777.5L143.8,777.5L144.6,777.5L145.4,777.5L146.2,777.5L147.0,777.5L147.8,777.5L148.6,777.8L148.9,778.2L149.1,778.6L149.4,779.0L149.7,779.4L149.9,779.8L150.2,780.1L150.4,780.5L150.7,780.9L151.0,781.3L151.2,781.7L151.5,782.1L151.8,782.4L152.0,782.8L152.3,783.2L152.6,783.6L152.8,784.0L153.1,784.4L153.4,784.7L153.6,785.1L153.9,785.7L154.2,786.3L154.4,786.9L154.7,787.5L155.0,788.1L155.2,788.7L155.5,789.3L155.7,789.9L156.0,790.5L156.3,791.1L156.5,791.6L156.8,792.2L157.1,792.8L157.3,793.4L157.6,794.0L157.9,794.6L158.1,795.2L158.4,795.8L158.7,796.4L158.9,797.0L159.2,797.6L159.5,798.2L159.7,798.9L160.0,799.5L160.2,800.2L160.5,800.9L160.8,801.6L161.0,802.3L161.3,803.0L161.6,803.7L161.8,804.4L162.1,805.1L162.4,805.8L162.6,806.4L162.9,807.1L163.2,807.8L163.4,808.5L163.7,809.2L164.0,809.9L164.2,810.6L164.5,811.3L164.8,812.0L165.0,812.6L165.3,813.5L165.5,814.3L165.8,815.2L166.1,816.0L166.3,816.8L166.6,817.7L166.9,818.5L167.1,819.4L167.4,820.2L167.7,821.0L167.9,796.8L168.7,796.8L169.5,796.8L170.3,796.8L171.1,831.9L171.4,832.8L171.6,833.7L171.9,834.7L172.2,835.6L172.4,836.6L172.7,837.5L173.0,838.5L173.2,839.4L173.5,840.4L173.8,841.3L174.0,842.3L174.3,843.2L174.6,844.2L174.8,845.1L175.1,846.1L175.3,847.0L175.6,848.0L175.9,848.9L176.1,849.9L176.4,850.8L176.7,851.8L176.9,852.4L177.2,853.0L177.5,853.6L177.7,854.1L178.0,854.7L178.3,855.3L178.5,855.9L178.8,856.5L179.1,857.1L179.3,857.7L179.6,858.2L179.9,858.8L180.1,859.4L180.4,860.0L180.6,860.6L180.9,861.2L181.2,861.7L181.4,862.3L181.7,862.9L182.0,863.5L182.2,864.1L182.5,864.7L182.8,865.3L183.0,865.8L183.3,866.4L183.6,867.0L183.8,867.6L184.1,868.2L184.4,868.8L184.6,869.4L184.9,869.9L185.1,870.5L185.7,871.1L186.2,871.6L186.7,872.1L187.3,872.7L187.8,873.2L188.3,873.7L188.9,874.3L189.4,874.8L189.9,875.3L190.4,875.9L191.0,876.4L191.5,876.9L192.0,877.5L192.6,878.0L193.1,878.5L193.6,879.1L194.2,879.6L194.4,861.7L195.2,861.7L196.0,861.7L196.8,861.7L197.6,882.6L198.1,883.1L198.7,883.6L199.2,883.9L199.7,884.3L200.2,884.7L200.8,885.1L201.3,885.4L201.8,885.8L202.4,886.2L202.9,886.5L203.4,886.9L204.0,887.3L204.5,887.6L205.0,888.0L205.5,888.4L206.1,888.7L206.6,889.1L207.1,889.5L207.7,889.8L208.2,890.2L208.7,890.6L209.3,891.0L209.8,891.2L210.3,891.5L210.8,891.8L211.4,892.0L211.9,892.3L212.4,892.6L213.0,892.8L213.5,893.1L214.0,893.4L214.6,893.6L215.1,893.9L215.6,894.2L216.1,894.5L216.7,894.7L217.2,895.0L217.7,895.3L218.3,895.5L218.8,895.8L219.3,896.1L219.9,896.2L220.4,896.4L220.9,873.4L221.7,873.4L222.5,873.4L223.3,873.4L224.1,897.7L224.6,897.9L225.1,898.0L225.7,898.2L226.2,898.4L226.7,898.5L227.3,898.7L227.8,898.8L228.3,899.0L228.9,899.1L229.4,899.3L229.9,899.5L230.4,899.6L231.0,899.8L231.5,899.9L232.0,900.1L232.6,900.2L233.1,900.4L233.6,900.5L234.2,900.7L234.7,900.9L235.2,901.0L235.7,901.2L236.3,901.3L236.8,901.5L237.3,901.6L237.9,901.8L238.4,902.0L238.9,902.1L239.5,902.3L240.0,902.4L240.5,902.6L241.0,902.7L241.6,902.9L242.1,903.0L242.6,903.2L243.2,903.4L243.7,903.5L244.2,903.7L244.8,903.8L245.3,904.0L245.8,904.1L246.3,904.3L246.9,904.4L247.4,904.5L247.9,904.6L248.5,904.7L249.0,904.8L249.5,904.9L250.0,905.0L250.6,905.1L251.1,905.2L251.6,905.3L252.2,905.4L252.7,905.5L253.2,905.6L253.8,905.7L254.3,905.8L254.8,905.9L255.3,906.0L255.9,906.1L256.4,906.2L256.9,906.3L257.5,906.4L258.0,906.5L258.5,906.6L259.1,906.7L259.6,906.8L260.1,906.9L260.6,907.1L261.2,907.2L261.7,907.3L262.2,907.4L262.8,907.5L263.3,907.6L263.8,907.7L264.4,907.8L264.9,907.9L265.4,908.0L265.9,908.1L266.5,908.2L267.0,908.3L267.5,908.4L268.1,908.5L268.6,908.6L269.1,908.7L269.7,908.8L270.2,908.9L270.7,909.0L271.2,909.1L271.8,909.2L272.3,909.3L272.8,909.4L273.4,909.5L273.9,909.6L274.2,879.9L274.9,879.9L275.7,879.9L276.5,879.9L277.3,910.1L277.9,910.2L278.4,910.3L278.9,910.4L279.5,910.5L280.0,910.5L280.5,910.6L281.0,910.7L281.6,910.8L282.1,910.9L282.6,911.0L283.2,911.1L283.7,911.1L284.2,911.2L284.8,911.3L285.3,911.4L285.8,911.5L286.3,911.6L286.9,911.7L287.4,911.7L287.9,911.8L288.5,911.9L289.0,912.0L289.5,912.1L290.0,912.2L290.6,912.3L291.1,912.3L291.6,912.4L292.2,912.5L292.7,912.6L293.2,912.7L293.8,912.8L294.3,912.8L294.8,912.9L295.3,913.0L295.9,913.1L296.4,913.2L296.9,913.3L297.5,913.4L298.0,913.4L298.5,913.5L299.1,913.6L299.6,913.7L300.4,913.8L301.2,913.9L302.0,914.0L302.8,914.1L303.6,914.1L304.4,914.2L305.1,914.3L305.9,914.4L306.7,914.5L307.5,914.6L308.3,914.7L309.1,914.8L309.9,914.9L310.7,915.0L311.5,915.1L312.3,915.1L313.1,915.2L313.9,915.3L314.7,915.4L315.5,915.5L316.3,915.6L317.1,915.7L317.9,915.8L318.7,915.9L319.5,916.0L320.2,916.1L321.0,916.1L321.8,916.2L322.6,916.3L323.4,916.4L324.2,916.5L325.0,916.6L325.8,916.7L326.6,916.8L327.4,872.8L328.2,872.8L329.0,872.8L329.8,872.8L330.3,932.7L330.8,932.9L331.4,933.0L331.9,933.2L332.4,933.4L333.0,933.6L333.5,933.7L334.0,933.9L334.6,934.1L335.1,934.2L335.6,934.4L336.1,934.5L336.7,934.6L337.2,934.8L337.7,934.9L338.3,935.0L338.8,935.2L339.3,935.3L339.9,935.4L340.4,935.5L340.9,935.6L341.4,935.7L342.0,935.8L342.5,935.9L343.0,936.0L343.6,936.1L344.1,936.2L344.6,936.3L345.1,936.4L345.7,936.5L346.2,936.6L346.7,936.7L347.3,936.7L347.8,936.8L348.3,936.9L348.9,937.0L349.4,937.0L350.2,937.1L351.0,937.2L351.8,937.3L352.6,937.4L353.4,937.5L354.2,937.6L354.9,937.7L355.7,937.7L356.5,937.8L357.3,937.9L358.1,938.0L358.9,938.0L359.7,938.1L360.5,938.1L361.3,938.2L362.1,938.3L362.9,938.3L363.7,938.4L364.5,938.4L365.3,938.4L366.1,938.5L366.9,938.5L367.7,938.6L368.5,938.6L369.3,938.6L370.0,938.7L370.8,938.7L371.6,938.7L372.4,938.8L373.2,938.8L374.0,938.8L374.8,938.9L375.6,938.9L376.4,938.9L377.2,938.9L378.0,939.0L378.8,939.0L379.6,939.0L380.4,939.0L381.2,939.0L382.0,939.1L382.8,939.1L383.6,939.1L384.4,939.1L385.1,939.1L385.9,939.1L386.7,939.2L387.5,939.2L388.3,939.2L389.1,939.2L389.9,939.2L390.7,939.2L391.5,939.2L392.3,939.2L393.1,939.2L393.9,939.3L394.7,939.3L395.5,939.3L396.3,939.3L397.1,939.3L397.9,939.3L398.7,939.3L399.5,939.3L400.2,939.3L401.0,939.3L401.8,939.3L402.6,939.3L403.4,939.3L404.2,939.4L405.0,939.4L405.8,939.4L406.6,892.4L407.1,769.2L407.9,769.2L408.5,792.5L409.3,792.5L410.0,792.5L410.8,792.5L411.4,861.2L411.6,864.8L411.9,868.2L412.2,871.5L412.4,874.6L412.7,877.6L413.0,880.4L413.2,883.1L413.5,885.6L413.8,888.1L414.0,890.4L414.3,892.6L414.6,894.6L414.8,896.6L415.1,898.5L415.3,900.3L415.6,902.0L415.9,903.6L416.1,905.1L416.4,906.6L416.7,908.0L416.9,909.3L417.2,910.6L417.5,911.8L417.7,912.9L418.0,914.0L418.3,915.1L418.5,916.1L418.8,917.0L419.1,917.9L419.3,918.8L419.6,919.6L419.9,920.4L420.1,921.1L420.4,921.8L420.6,922.5L420.9,923.1L421.2,923.8L421.4,924.3L421.7,924.9L422.0,925.4L422.2,925.9L422.5,926.4L422.8,926.9L423.0,927.3L423.3,927.8L423.6,928.2L423.8,928.6L424.1,928.9L424.4,929.3L424.6,929.6L425.1,930.3L425.7,930.9L426.2,931.4L426.7,931.9L427.3,932.4L427.8,932.8L428.3,933.2L428.9,933.5L429.4,933.9L429.9,934.2L430.4,934.5L431.0,934.7L431.5,935.0L432.0,935.2L432.6,935.4L433.1,935.6L433.6,935.8L434.2,936.0L434.7,936.2L435.2,936.3L435.7,936.5L436.3,936.6L436.8,936.8L437.3,936.9L437.9,937.0L438.4,937.1L438.9,937.2L439.5,937.3L440.0,937.4L440.5,937.5L441.0,937.6L441.6,937.7L442.1,937.8L442.6,937.9L443.2,938.0L443.7,938.0L444.2,938.1L445.0,938.2L445.8,938.3L446.6,938.4L447.4,938.5L448.2,938.6L449.0,938.7L449.8,938.7L450.6,938.8L451.4,938.9L452.2,938.9L453.0,939.0L453.8,939.1L454.6,939.1L455.3,939.2L456.1,939.2L456.9,939.3L457.7,939.3L458.5,939.4L459.3,939.4L460.1,939.5L460.9,939.5L461.7,939.6L462.5,939.6L463.3,939.6L464.1,939.7L464.9,939.7L465.7,939.7L466.5,939.8L467.3,939.8L468.1,939.8L468.9,939.9L469.7,939.9L470.4,939.9L471.2,939.9L472.0,940.0L472.8,940.0L473.6,940.0L474.4,940.0L475.2,940.1L476.0,940.1L476.8,940.1L477.6,940.1L478.4,940.1L479.2,940.1L480.0,940.2L480.8,940.2L481.6,940.2L482.4,940.2L483.2,940.2L484.0,940.2L484.8,940.3L485.5,940.3L486.1,892.4L486.9,753.3L487.7,753.3L488.2,791.1L489.0,791.1L489.8,791.1L490.6,791.1L491.1,861.2L491.4,864.8L491.6,868.2L491.9,871.5L492.2,874.6L492.4,877.6L492.7,880.4L493.0,883.1L493.2,885.6L493.5,888.1L493.8,890.4L494.0,892.6L494.3,894.6L494.6,896.6L494.8,898.5L495.1,900.3L495.3,902.0L495.6,903.6L495.9,905.1L496.1,906.6L496.4,908.0L496.7,909.3L496.9,910.6L497.2,911.8L497.5,912.9L497.7,914.0L498.0,915.1L498.3,916.1L498.5,917.0L498.8,917.9L499.1,918.8L499.3,919.6L499.6,920.4L499.8,921.1L500.1,921.8L500.4,922.5L500.6,923.1L500.9,923.8L501.2,924.3L501.4,924.9L501.7,925.4L502.0,925.9L502.2,926.4L502.5,926.9L502.8,927.3L503.0,927.8L503.3,928.2L503.6,928.6L503.8,928.9L504.1,929.3L504.4,929.6L504.9,930.3L505.4,930.9L505.9,931.4L506.5,931.9L507.0,932.4L507.5,932.8L508.1,933.2L508.6,933.5L509.1,933.9L509.7,934.2L510.2,934.5L510.7,934.7L511.2,935.0L511.8,935.2L512.3,935.4L512.8,935.6L513.4,935.8L513.9,936.0L514.4,936.2L514.9,936.3L515.5,936.5L516.0,936.6L516.5,936.8L517.1,936.9L517.6,937.0L518.1,937.1L518.7,937.2L519.2,937.3L519.7,937.4L520.2,937.5L520.8,937.6L521.3,937.7L521.8,937.8L522.4,937.9L522.9,938.0L523.4,938.0L524.0,938.1L524.8,938.2L525.5,938.3L526.3,938.4L527.1,938.5L527.9,938.6L528.7,938.7L529.5,938.7L530.3,938.8L531.1,938.9L531.9,938.9L532.7,939.0L533.5,939.1L534.3,939.1L535.1,939.2L535.9,939.2L536.7,939.3L537.5,939.3L538.3,939.4L539.1,939.4L539.8,939.5L540.6,939.5L541.4,939.6L542.2,939.6L543.0,939.6L543.8,939.7L544.6,939.7L545.4,939.7L546.2,939.8L547.0,939.8L547.8,939.8L548.6,939.9L549.4,939.9L550.2,939.9L551.0,939.9L551.8,940.0L552.6,940.0L553.4,940.0L554.2,940.0L554.9,940.1L555.7,940.1L556.5,940.1L557.3,940.1L558.1,940.1L558.9,940.1L559.7,940.2L560.5,940.2L561.3,940.2L562.1,940.2L562.9,940.2L563.7,940.2L564.5,940.3L565.3,940.3L565.8,844.1L566.6,748.2L567.4,748.2L567.9,789.4L568.7,789.4L569.5,789.4L570.3,789.4L570.8,860.6L571.1,864.2L571.4,867.7L571.6,871.0L571.9,874.1L572.2,877.0L572.4,879.9L572.7,882.5L573.0,885.1L573.2,887.5L573.5,889.8L573.8,892.0L574.0,894.1L574.3,896.0L574.6,897.9L574.8,899.7L575.1,901.4L575.3,903.0L575.6,904.6L575.9,906.0L576.1,907.4L576.4,908.8L576.7,910.0L576.9,911.2L577.2,912.4L577.5,913.5L577.7,914.5L578.0,915.5L578.3,916.4L578.5,917.3L578.8,918.2L579.1,919.0L579.3,919.8L579.6,920.5L579.8,921.2L580.1,921.9L580.4,922.6L580.6,923.2L580.9,923.8L581.2,924.3L581.4,924.9L581.7,925.4L582.0,925.9L582.2,926.3L582.5,926.8L582.8,927.2L583.0,927.6L583.3,928.0L583.6,928.4L583.8,928.7L584.1,929.1L584.6,929.7L585.1,930.3L585.7,930.8L586.2,931.3L586.7,931.8L587.3,932.2L587.8,932.6L588.3,933.0L588.9,933.3L589.4,933.6L589.9,933.9L590.4,934.2L591.0,934.4L591.5,934.6L592.0,934.9" stroke="#10e010"/><path d="M62.5,952.0L63.3,952.0L64.1,952.0L64.9,952.0L65.7,952.0L66.5,952.0L67.3,952.0L68.1,952.0L68.3,810.9L69.1,810.9L69.9,810.9L70.7,810.9L71.5,893.2L71.8,894.7L72.0,896.2L72.3,897.6L72.6,899.0L72.8,900.3L73.1,901.6L73.4,902.9L73.6,904.1L73.9,905.3L74.2,906.5L74.4,907.6L74.7,908.7L75.0,909.8L75.2,910.8L75.5,911.8L75.7,912.8L76.0,913.7L76.3,914.7L76.5,915.6L76.8,916.4L77.1,917.3L77.3,918.1L77.6,918.9L77.9,919.7L78.1,920.5L78.4,921.2L78.7,921.9L78.9,922.6L79.2,923.3L79.5,924.0L79.7,924.6L80.0,925.2L80.2,925.8L80.5,926.4L80.8,927.0L81.0,927.5L81.3,928.1L81.6,928.6L81.8,929.1L82.1,929.6L82.4,930.1L82.6,930.6L82.9,931.0L83.2,931.5L83.4,931.9L83.7,932.3L84.0,932.8L84.2,933.2L84.5,933.5L84.8,933.9L85.0,934.3L85.3,934.7L85.5,935.0L85.8,935.3L86.3,936.0L86.9,936.6L87.4,937.2L87.9,937.7L88.5,938.3L89.0,938.8L89.5,939.2L90.0,939.7L90.6,940.1L91.1,940.5L91.6,940.9L92.2,941.3L92.7,941.6L93.2,941.9L93.8,942.2L94.3,942.5L94.8,942.8L95.3,943.1L95.9,943.3L96.4,943.6L96.9,943.8L97.5,944.0L98.0,944.2L98.5,944.4L99.1,944.6L99.6,944.8L100.1,944.9L100.6,945.1L101.2,945.2L101.7,945.4L102.2,945.5L102.8,945.7L103.3,945.8L103.8,945.9L104.4,946.0L104.9,946.1L105.4,946.2L105.9,946.3L106.5,946.4L107.0,946.5L107.5,946.6L108.1,946.7L108.6,946.8L109.1,946.9L109.7,946.9L110.2,947.0L111.0,947.1L111.8,947.2L112.6,947.3L113.4,947.4L114.2,947.4L115.0,947.5L115.7,947.6L116.5,947.7L117.3,947.7L118.1,947.8L118.9,947.8L119.7,947.9L120.5,947.9L121.3,948.0L122.1,948.0L122.9,948.1L123.7,948.1L124.5,948.1L125.3,948.2L126.1,948.2L126.9,948.2L127.7,948.3L128.5,948.3L129.3,948.3L130.0,948.4L130.8,948.4L131.6,948.4L132.4,948.4L133.2,948.5L134.0,948.5L134.8,948.5L135.6,948.5L136.4,948.5L137.2,948.6L138.0,948.6L138.8,948.6L139.6,948.6L140.4,948.6L141.2,948.7L142.0,948.7L142.2,821.4L142.8,821.6L143.3,821.9L143.8,822.1L144.4,822.3L144.9,822.5L145.4,822.7L145.9,822.9L146.5,823.1L147.0,823.3L147.5,823.5L148.1,823.7L148.3,824.2L148.6,824.7L148.9,825.2L149.1,825.7L149.4,826.2L149.7,826.7L149.9,827.2L150.2,827.7L150.4,828.2L150.7,828.7L151.0,829.2L151.2,829.7L151.5,830.2L151.8,830.7L152.0,831.2L152.3,831.7L152.6,832.2L152.8,832.7L153.1,833.2L153.4,833.7L153.6,834.2L153.9,834.7L154.2,835.2L154.4,835.7L154.7,836.2L155.0,836.7L155.2,837.1L155.5,837.6L155.7,838.1L156.0,838.6L156.3,839.1L156.5,839.6L156.8,840.1L157.1,840.6L157.3,841.1L157.6,841.6L157.9,842.0L158.1,842.5L158.4,843.0L158.7,843.5L158.9,844.0L159.2,844.5L159.5,845.0L159.7,845.5L160.0,846.0L160.2,846.6L160.5,847.1L160.8,847.6L161.0,848.2L161.3,848.7L161.6,849.2L161.8,849.7L162.1,850.3L162.4,850.8L162.6,851.3L162.9,851.8L163.2,852.4L163.4,852.9L163.7,853.4L164.0,853.9L164.2,854.5L164.5,855.0L164.8,855.5L165.0,856.1L165.3,856.7L165.5,857.3L165.8,858.0L166.1,858.6L166.3,859.3L166.6,859.9L166.9,860.6L167.1,861.2L167.4,861.9L167.7,862.5L167.9,831.4L168.7,831.4L169.5,831.4L170.3,831.4L171.1,867.3L171.4,867.7L171.6,868.2L171.9,868.7L172.2,869.2L172.4,869.7L172.7,870.2L173.0,870.7L173.2,871.2L173.5,871.7L173.8,872.2L174.0,872.7L174.3,873.2L174.6,873.6L174.8,874.1L175.1,874.6L175.3,875.1L175.6,875.6L175.9,876.1L176.1,876.6L176.4,877.1L176.7,877.6L176.9,878.1L177.2,878.5L177.5,879.0L177.7,879.4L178.0,879.9L178.3,880.3L178.5,880.8L178.8,881.2L179.1,881.7L179.3,882.1L179.6,882.6L179.9,883.0L180.1,883.5L180.4,884.0L180.6,884.4L180.9,884.9L181.2,885.3L181.4,885.8L181.7,886.2L182.0,886.7L182.2,887.1L182.5,887.6L182.8,888.0L183.0,888.5L183.3,888.9L183.6,889.4L183.8,889.8L184.1,890.3L184.4,890.7L184.6,891.2L184.9,891.6L185.1,892.1L185.7,892.6L186.2,893.2L186.7,893.7L187.3,894.2L187.8,894.8L188.3,895.3L188.9,895.8L189.4,896.4L189.9,896.9L190.4,897.4L191.0,898.0L191.5,898.5L192.0,899.0L192.6,899.6L193.1,900.1L193.6,900.6L194.2,901.1L194.4,882.2L195.2,882.2L196.0,882.2L196.8,882.2L197.6,903.5L198.1,903.9L198.7,904.3L199.2,904.7L199.7,905.1L200.2,905.5L200.8,905.9L201.3,906.3L201.8,906.7L202.4,907.1L202.9,907.5L203.4,907.9L204.0,908.3L204.5,908.7L205.0,909.1L205.5,909.5L206.1,909.9L206.6,910.3L207.1,910.6L207.7,911.0L208.2,911.4L208.7,911.8L209.3,912.2L209.8,912.6L210.3,912.9L210.8,913.2L211.4,913.5L211.9,913.8L212.4,914.1L213.0,914.4L213.5,914.7L214.0,915.1L214.6,915.4L215.1,915.7L215.6,916.0L216.1,916.3L216.7,916.6L217.2,916.9L217.7,917.3L218.3,917.6L218.8,917.9L219.3,918.2L219.9,918.4L220.4,918.7L220.9,897.5L221.7,897.5L222.5,897.5L223.3,897.5L224.1,920.3L224.6,920.5L225.1,920.8L225.7,920.9L226.2,921.0L226.7,921.1L227.3,921.2L227.8,921.4L228.3,921.5L228.9,921.6L229.4,921.7L229.9,921.8L230.4,922.0L231.0,922.1L231.5,922.2L232.0,922.3L232.6,922.4L233.1,922.6L233.6,922.7L234.2,922.8L234.7,922.9L235.2,923.0L235.7,923.2L236.3,923.3L236.8,923.4L237.3,923.5L237.9,923.6L238.4,923.8L238.9,923.9L239.5,924.0L240.0,924.1L240.5,924.2L241.0,924.4L241.6,924.5L242.1,924.6L242.6,924.7L243.2,924.9L243.7,925.0L244.2,925.1L244.8,925.2L245.3,925.3L245.8,925.5L246.3,925.6L246.9,925.6L247.4,925.7L247.9,925.8L248.5,925.9L249.0,925.9L249.5,926.0L250.0,926.1L250.6,926.2L251.1,926.2L251.6,926.3L252.2,926.4L252.7,926.5L253.2,926.5L253.8,926.6L254.3,926.7L254.8,926.8L255.3,926.8L255.9,926.9L256.4,927.0L256.9,927.0L257.5,927.1L258.0,927.2L258.5,927.3L259.1,927.3L259.6,927.4L260.1,927.5L260.6,927.6L261.2,927.6L261.7,927.7L262.2,927.8L262.8,927.9L263.3,927.9L263.8,928.0L264.4,928.1L264.9,928.2L265.4,928.2L265.9,928.3L266.5,928.4L267.0,928.5L267.5,928.5L268.1,928.6L268.6,928.7L269.1,928.7L269.7,928.8L270.2,928.9L270.7,929.0L271.2,929.0L271.8,929.1L272.3,929.2L272.8,929.3L273.6,929.3L274.2,900.9L274.9,900.9L275.7,900.9L276.5,900.9L277.3,929.6L278.1,929.7L278.9,929.8L279.7,929.9L280.5,929.9L281.3,930.0L282.1,930.1L282.9,930.1L283.7,930.2L284.5,930.3L285.3,930.3L286.1,930.4L286.9,930.5L287.7,930.5L288.5,930.6L289.3,930.7L290.0,930.7L290.8,930.8L291.6,930.9L292.4,930.9L293.2,931.0L294.0,931.1L294.8,931.1L295.6,931.2L296.4,931.3L297.2,931.4L298.0,931.4L298.8,931.5L299.6,931.5L300.4,931.6L301.2,931.6L302.0,931.6L302.8,931.6L303.6,931.7L304.4,931.7L305.1,931.7L305.9,931.7L306.7,931.8L307.5,931.8L308.3,931.8L309.1,931.8L309.9,931.9L310.7,931.9L311.5,931.9L312.3,931.9L313.1,932.0L313.9,932.0L314.7,932.0L315.5,932.0L316.3,932.1L317.1,932.1L317.9,932.1L318.4,931.9L318.9,931.6L319.5,931.4L320.0,931.2L320.5,931.0L321.0,930.7L321.6,930.5L322.4,930.6L322.9,930.9L323.4,931.2L324.0,931.4L324.5,931.7L325.0,931.9L325.5,932.2L326.1,932.4L326.6,932.7L327.4,889.3L328.2,889.3L329.0,889.3L329.8,889.3L330.3,941.2L330.8,941.4L331.4,941.7L331.9,941.9L332.4,942.1L333.0,942.4L333.5,942.6L334.0,942.8L334.6,943.0L335.1,943.2L335.6,943.4L336.1,943.5L336.7,943.7L337.2,943.9L337.7,944.0L338.3,944.2L338.8,944.3L339.3,944.5L339.9,944.6L340.4,944.8L340.9,944.9L341.4,945.0L342.0,945.2L342.5,945.3L343.0,945.4L343.6,945.5L344.1,945.6L344.6,945.7L345.1,945.8L345.7,945.9L346.2,946.0L346.7,946.1L347.3,946.2L347.8,946.3L348.3,946.4L348.9,946.5L349.4,946.5L349.9,946.6L350.4,946.7L351.0,946.8L351.8,946.9L352.6,947.0L353.4,947.0L354.2,947.1L354.9,947.2L355.7,947.3L356.5,947.4L357.3,947.4L358.1,947.5L358.9,947.6L359.7,947.6L360.5,947.7L361.3,947.8L362.1,947.8L362.9,947.9L363.7,947.9L364.5,947.9L365.3,948.0L366.1,948.0L366.9,948.1L367.7,948.1L368.5,948.1L369.3,948.2L370.0,948.2L370.8,948.2L371.6,948.3L372.4,948.3L373.2,948.3L374.0,948.4L374.8,948.4L375.6,948.4L376.4,948.4L377.2,948.4L378.0,948.5L378.8,948.5L379.6,948.5L380.4,948.5L381.2,948.5L382.0,948.5L382.8,948.6L383.6,948.6L384.4,948.6L385.1,948.6L385.9,948.6L386.7,948.6L387.5,948.6L388.3,948.6L389.1,948.7L389.9,948.7L390.7,948.7L391.5,948.7L392.3,948.7L393.1,948.7L393.9,948.7L394.7,948.7L395.5,948.7L396.3,948.7L397.1,948.7L397.9,948.7L398.7,948.7L399.5,948.7L400.2,948.7L401.0,948.8L401.8,948.8L402.6,948.8L403.4,948.8L404.2,948.8L405.0,948.8L405.8,948.8L406.6,949.1L407.1,816.9L407.9,816.9L408.5,832.8L409.3,832.8L410.0,832.8L410.8,832.8L411.4,881.3L411.6,885.1L411.9,888.7L412.2,892.1L412.4,895.2L412.7,898.2L413.0,901.0L413.2,903.6L413.5,906.0L413.8,908.3L414.0,910.4L414.3,912.5L414.6,914.3L414.8,916.1L415.1,917.8L415.3,919.4L415.6,920.8L415.9,922.2L416.1,923.5L416.4,924.8L416.7,925.9L416.9,927.0L417.2,928.0L417.5,929.0L417.7,929.9L418.0,930.7L418.3,931.6L418.5,932.3L418.8,933.0L419.1,933.7L419.3,934.3L419.6,934.9L419.9,935.5L420.1,936.0L420.4,936.5L420.6,937.0L420.9,937.5L421.2,937.9L421.4,938.3L421.7,938.7L422.0,939.1L422.2,939.4L422.8,940.0L423.3,940.6L423.8,941.1L424.4,941.6L424.9,942.0L425.4,942.4L425.9,942.8L426.5,943.1L427.0,943.4L427.5,943.7L428.1,943.9L428.6,944.2L429.1,944.4L429.7,944.6L430.2,944.8L430.7,945.0L431.2,945.1L431.8,945.3L432.3,945.4L432.8,945.6L433.4,945.7L433.9,945.8L434.4,946.0L434.9,946.1L435.5,946.2L436.0,946.3L436.5,946.4L437.1,946.5L437.6,946.6L438.1,946.7L438.7,946.7L439.2,946.8L439.7,946.9L440.2,947.0L440.8,947.0L441.6,947.2L442.4,947.3L443.2,947.3L444.0,947.4L444.8,947.5L445.5,947.6L446.3,947.7L447.1,947.8L447.9,947.8L448.7,947.9L449.5,948.0L450.3,948.0L451.1,948.1L451.9,948.1L452.7,948.2L453.5,948.2L454.3,948.3L455.1,948.3L455.9,948.4L456.7,948.4L457.5,948.5L458.3,948.5L459.1,948.5L459.9,948.6L460.6,948.6L461.4,948.6L462.2,948.7L463.0,948.7L463.8,948.7L464.6,948.8L465.4,948.8L466.2,948.8L467.0,948.8L467.8,948.9L468.6,948.9L469.4,948.9L470.2,948.9L471.0,949.0L471.8,949.0L472.6,949.0L473.4,949.0L474.2,949.0L474.9,949.0L475.7,949.1L476.5,949.1L477.3,949.1L478.1,949.1L478.9,949.1L479.7,949.1L480.5,949.1L481.3,949.1L482.1,949.2L482.9,949.2L483.7,949.2L484.5,949.2L485.3,949.2L486.1,949.1L486.9,805.5L487.7,805.5L488.2,830.0L489.0,830.0L489.8,830.0L490.6,830.0L491.1,881.3L491.4,885.1L491.6,888.7L491.9,892.1L492.2,895.2L492.4,898.2L492.7,901.0L493.0,903.6L493.2,906.0L493.5,908.3L493.8,910.4L494.0,912.5L494.3,914.3L494.6,916.1L494.8,917.8L495.1,919.4L495.3,920.8L495.6,922.2L495.9,923.5L496.1,924.8L496.4,925.9L496.7,927.0L496.9,928.0L497.2,929.0L497.5,929.9L497.7,930.7L498.0,931.6L498.3,932.3L498.5,933.0L498.8,933.7L499.1,934.3L499.3,934.9L499.6,935.5L499.8,936.0L500.1,936.5L500.4,937.0L500.6,937.5L500.9,937.9L501.2,938.3L501.4,938.7L501.7,939.1L502.0,939.4L502.5,940.0L503.0,940.6L503.6,941.1L504.1,941.6L504.6,942.0L505.1,942.4L505.7,942.8L506.2,943.1L506.7,943.4L507.3,943.7L507.8,943.9L508.3,944.2L508.9,944.4L509.4,944.6L509.9,944.8L510.4,945.0L511.0,945.1L511.5,945.3L512.0,945.4L512.6,945.6L513.1,945.7L513.6,945.8L514.2,946.0L514.7,946.1L515.2,946.2L515.7,946.3L516.3,946.4L516.8,946.5L517.3,946.6L517.9,946.7L518.4,946.7L518.9,946.8L519.5,946.9L520.0,947.0L520.5,947.0L521.3,947.2L522.1,947.3L522.9,947.3L523.7,947.4L524.5,947.5L525.3,947.6L526.1,947.7L526.9,947.8L527.7,947.8L528.5,947.9L529.3,948.0L530.0,948.0L530.8,948.1L531.6,948.1L532.4,948.2L533.2,948.2L534.0,948.3L534.8,948.3L535.6,948.4L536.4,948.4L537.2,948.5L538.0,948.5L538.8,948.5L539.6,948.6L540.4,948.6L541.2,948.6L542.0,948.7L542.8,948.7L543.6,948.7L544.4,948.8L545.1,948.8L545.9,948.8L546.7,948.8L547.5,948.9L548.3,948.9L549.1,948.9L549.9,948.9L550.7,949.0L551.5,949.0L552.3,949.0L553.1,949.0L553.9,949.0L554.7,949.0L555.5,949.1L556.3,949.1L557.1,949.1L557.9,949.1L558.7,949.1L559.5,949.1L560.2,949.1L561.0,949.1L561.8,949.2L562.6,949.2L563.4,949.2L564.2,949.2L565.0,949.2L565.8,949.1L566.6,798.2L567.4,798.2L567.9,828.5L568.7,828.5L569.5,828.5L570.3,828.5L570.8,881.0L571.1,884.8L571.4,888.4L571.6,891.8L571.9,894.9L572.2,897.9L572.4,900.7L572.7,903.3L573.0,905.7L573.2,908.0L573.5,910.1L573.8,912.2L574.0,914.1L574.3,915.8L574.6,917.5L574.8,919.1L575.1,920.6L575.3,922.0L575.6,923.3L575.9,924.5L576.1,925.6L576.4,926.7L576.7,927.7L576.9,928.7L577.2,929.6L577.5,930.5L577.7,931.3L578.0,932.0L578.3,932.7L578.5,933.4L578.8,934.1L579.1,934.7L579.3,935.2L579.6,935.8L579.8,936.3L580.1,936.7L580.4,937.2L580.6,937.6L580.9,938.0L581.2,938.4L581.4,938.8L581.7,939.1L582.2,939.8L582.8,940.3L583.3,940.9L583.8,941.3L584.4,941.8L584.9,942.1L585.4,942.5L585.9,942.8L586.5,943.1L587.0,943.4L587.5,943.7L588.1,943.9L588.6,944.1L589.1,944.3L589.7,944.5L590.2,944.7L590.7,944.9L591.2,945.0L591.8,945.2L592.3,945.3" stroke="#d00808"/></g><rect x="227" y="1003" width="15" height="5" fill="#0000e0"/><rect x="293.500" y="1003" width="15" height="5" fill="#00e800"/><rect x="361" y="1003" width="15" height="5" fill="#e80000"/><g font-family="Liberation Sans, sans-serif" font-size="11" fill="#111"><text x="251.500" y="1009">Area 1</text><text x="318.500" y="1009">Area 2</text><text x="385.500" y="1009">Area 3</text><text x="604" y="1012" text-anchor="end">time [s]</text></g><g font-family="Liberation Sans, sans-serif" font-size="10.700" fill="#111"><text x="50" y="754.500" text-anchor="end">800</text><text x="50" y="868" text-anchor="end">400</text><text x="168.5" y="996" text-anchor="middle">40</text><text x="274.4" y="996" text-anchor="middle">80</text><text x="380.4" y="996" text-anchor="middle">120</text><text x="486.3" y="996" text-anchor="middle">160</text><text x="599.500" y="996" text-anchor="end">200</text></g></svg>
<div class="a" style="left:613px;top:121px;width:31px;height:890.2px;background:linear-gradient(180deg,#ff0000 0%,#ffff00 50%,#00ff00 75%,#0000ff 87.5%,#000000 100%)"></div>
<svg class="a" style="left:644px;top:0" width="60" height="1036" viewBox="0 0 60 1036" shape-rendering="crispEdges"><path d="M0,128.5h5M0,137.5h5M0,146.5h5M0,155.5h9.5M0,164.5h5M0,174.5h5M0,183.5h5M0,192.5h5M0,201.5h9.5M0,210.5h5M0,220.5h5M0,229.5h5M0,238.5h5M0,247.5h9.5M0,256.5h5M0,265.5h5M0,275.5h5M0,284.5h5M0,293.5h9.5M0,302.5h5M0,311.5h5M0,321.5h5M0,330.5h5M0,339.5h9.5M0,348.5h5M0,357.5h5M0,367.5h5M0,376.5h5M0,385.5h9.5M0,394.5h5M0,403.5h5M0,413.5h5M0,422.5h5M0,431.5h9.5M0,440.5h5M0,449.5h5M0,458.5h5M0,468.5h5M0,477.5h9.5M0,486.5h5M0,495.5h5M0,504.5h5M0,514.5h5M0,523.5h9.5M0,532.5h5M0,541.5h5M0,550.5h5M0,560.5h5M0,569.5h9.5M0,578.5h5M0,587.5h5M0,596.5h5M0,605.5h5M0,615.5h9.5M0,624.5h5M0,633.5h5M0,642.5h5M0,651.5h5M0,661.5h9.5M0,670.5h5M0,679.5h5M0,688.5h5M0,697.5h5M0,707.5h9.5M0,716.5h5M0,725.5h5M0,734.5h5M0,743.5h5M0,753.5h9.5M0,762.5h5M0,771.5h5M0,780.5h5M0,789.5h5M0,798.5h9.5M0,808.5h5M0,817.5h5M0,826.5h5M0,835.5h5M0,844.5h9.5M0,854.5h5M0,863.5h5M0,872.5h5M0,881.5h5M0,890.5h9.5M0,900.5h5M0,909.5h5M0,918.5h5M0,927.5h5M0,936.5h9.5M0,946.5h5M0,955.5h5M0,964.5h5M0,973.5h5M0,982.5h9.5M0,991.5h5M0,1001.5h5M0,1010.5h5" stroke="#000" stroke-width="1" fill="none"/></svg>
<div class="t" style="left:657px;top:148.7px;font-size:12px;color:#111">210</div>
<div class="t" style="left:657px;top:194.6px;font-size:12px;color:#111">200</div>
<div class="t" style="left:657px;top:240.6px;font-size:12px;color:#111">190</div>
<div class="t" style="left:657px;top:286.5px;font-size:12px;color:#111">180</div>
<div class="t" style="left:657px;top:332.5px;font-size:12px;color:#111">170</div>
<div class="t" style="left:657px;top:378.4px;font-size:12px;color:#111">160</div>
<div class="t" style="left:657px;top:424.4px;font-size:12px;color:#111">150</div>
<div class="t" style="left:657px;top:470.3px;font-size:12px;color:#111">140</div>
<div class="t" style="left:657px;top:516.3px;font-size:12px;color:#111">130</div>
<div class="t" style="left:657px;top:562.2px;font-size:12px;color:#111">120</div>
<div class="t" style="left:657px;top:608.2px;font-size:12px;color:#111">110</div>
<div class="t" style="left:657px;top:654.1px;font-size:12px;color:#111">100</div>
<div class="t" style="left:657px;top:700.1px;font-size:12px;color:#111">90</div>
<div class="t" style="left:657px;top:746.0px;font-size:12px;color:#111">80</div>
<div class="t" style="left:657px;top:792.0px;font-size:12px;color:#111">70</div>
<div class="t" style="left:657px;top:837.9px;font-size:12px;color:#111">60</div>
<div class="t" style="left:657px;top:883.9px;font-size:12px;color:#111">50</div>
<div class="t" style="left:657px;top:929.8px;font-size:12px;color:#111">40</div>
<div class="t" style="left:657px;top:975.8px;font-size:12px;color:#111">30</div>
<svg class="a" style="left:618px;top:88px" width="26" height="24" viewBox="0 0 26 24">
<g font-family="Liberation Sans, sans-serif" font-size="8" fill="#000"><text x="9.500" y="8.500">100</text><text x="10" y="16">50</text><text x="6" y="23">20</text></g>
<path d="M1,8.500h7v-2.500l4,3.500l-4,3.500v-2.500h-7z" fill="#f4f43c" stroke="#c8c820" stroke-width=".6"/>
<path d="M2,3.500h3M3.500,2v3M2,13.500h2.500" stroke="#000" stroke-width="1"/>
<path d="M7.500,12v6M6,4h3" stroke="#000" stroke-width="1" fill="none"/>
<path d="M6.500,16.500l-4,3.500l4,3.500" stroke="#000" stroke-width="1" fill="none"/>
</svg>
<div class="a" style="left:701px;top:82px;width:510px;height:561px;border:1px solid;border-color:#828282 #fff #fff #828282;background:#fff"></div>
<div class="a" style="left:702px;top:83px;width:508px;height:559px;border:1px solid;border-color:#696969 #e3e3e3 #e3e3e3 #696969;background:#fff;overflow:hidden"></div>
<svg class="a" style="left:703px;top:84px" width="386" height="558" viewBox="0 0 386 558"><filter id="tgrain" x="0" y="0" width="100%" height="100%" color-interpolation-filters="sRGB"><feTurbulence type="fractalNoise" baseFrequency="0.5" numOctaves="2" seed="21" result="n"/><feColorMatrix in="n" type="matrix" values="0 0 0 0 0  0 0 0 0 0  0 0 0 0 0  0.55 0 0 0 -0.21" result="d0"/><feComposite in="d0" in2="SourceAlpha" operator="in" result="d"/><feColorMatrix in="n" type="matrix" values="0 0 0 0 1  0 0 0 0 1  0 0 0 0 1  0 0.32 0 0 -0.13" result="l0"/><feComposite in="l0" in2="SourceAlpha" operator="in" result="l"/><feMerge><feMergeNode in="SourceGraphic"/><feMergeNode in="d"/><feMergeNode in="l"/></feMerge></filter><filter id="tgrainc" x="0" y="0" width="100%" height="100%" color-interpolation-filters="sRGB"><feTurbulence type="fractalNoise" baseFrequency="0.5" numOctaves="2" seed="4" result="n"/><feColorMatrix in="n" type="matrix" values="0 0 0 0 1  0 0 0 0 1  0 0 0 0 0  0 1.2 0 0 -0.52" result="l0"/><feComposite in="l0" in2="SourceAlpha" operator="in" result="l"/><feColorMatrix in="n" type="matrix" values="0 0 0 0 1  0 0 0 0 0.25  0 0 0 0 0  1.2 0 0 0 -0.52" result="d0"/><feComposite in="d0" in2="SourceAlpha" operator="in" result="d"/><feMerge><feMergeNode in="SourceGraphic"/><feMergeNode in="l"/><feMergeNode in="d"/></feMerge></filter><rect x="0" y="0" width="128" height="128" fill="#030303"/><g filter="url(#tgrain)"><use href="#plant" x="0" y="0" width="128" height="128" style="filter:brightness(1.0)"/></g><g filter="url(#tgrainc)"><use href="#areas" x="0" y="0" width="128" height="128" style="--a1:#ff7800;--a2:#ffe000;--a3:#44ff00;--s1:#ffcc00;--s2:#98ff00;--s3:#44ff00"/></g><rect x="129" y="0" width="128" height="128" fill="#030303"/><g filter="url(#tgrain)"><use href="#plant" x="129" y="0" width="128" height="128" style="filter:brightness(1.35)"/></g><g filter="url(#tgrainc)"><use href="#areas" x="129" y="0" width="128" height="128" style="--a1:#e4f000;--a2:#ff4800;--a3:#ffe000;--s1:#98ff00;--s2:#ffcc00;--s3:#98ff00"/></g><rect x="258" y="0" width="128" height="128" fill="#030303"/><g filter="url(#tgrain)"><use href="#plant" x="258" y="0" width="128" height="128" style="filter:brightness(1.6)"/></g><g filter="url(#tgrainc)"><use href="#areas" x="258" y="0" width="128" height="128" style="--a1:#ffc000;--a2:#ff2a00;--a3:#ffc800;--s1:#f4f000;--s2:#ffcc00;--s3:#f4f000"/></g><rect x="0" y="149" width="128" height="128" fill="#030303"/><g filter="url(#tgrain)"><use href="#plant" x="0" y="149" width="128" height="128" style="filter:brightness(1.45)"/></g><g filter="url(#tgrainc)"><use href="#areas" x="0" y="149" width="128" height="128" style="--a1:#ffc000;--a2:#ff5a00;--a3:#f0f000;--s1:#f4f000;--s2:#ffcc00;--s3:#98ff00"/></g><rect x="129" y="149" width="128" height="128" fill="#030303"/><g filter="url(#tgrain)"><use href="#plant" x="129" y="149" width="128" height="128" style="filter:brightness(1.1)"/></g><g filter="url(#tgrainc)"><use href="#areas" x="129" y="149" width="128" height="128" style="--a1:#ff5200;--a2:#f0f000;--a3:#50ff00;--s1:#ffcc00;--s2:#98ff00;--s3:#50ff00"/></g><rect x="258" y="149" width="128" height="128" fill="#030303"/><g filter="url(#tgrain)"><use href="#plant" x="258" y="149" width="128" height="128" style="filter:brightness(1.15)"/></g><g filter="url(#tgrainc)"><use href="#areas" x="258" y="149" width="128" height="128" style="--a1:#ff5a00;--a2:#c0ff00;--a3:#20f020;--s1:#ffcc00;--s2:#60ff00;--s3:#20f020"/></g><rect x="0" y="298" width="128" height="128" fill="#030303"/><g filter="url(#tgrain)"><use href="#plant" x="0" y="298" width="128" height="128" style="filter:brightness(1.0)"/></g><g filter="url(#tgrainc)"><use href="#areas" x="0" y="298" width="128" height="128" style="--a1:#ff6a00;--a2:#d0ff00;--a3:#30ff00;--s1:#ffcc00;--s2:#60ff00;--s3:#30ff00"/></g><rect x="129" y="298" width="128" height="128" fill="#030303"/><g filter="url(#tgrain)"><use href="#plant" x="129" y="298" width="128" height="128" style="filter:brightness(1.05)"/></g><g filter="url(#tgrainc)"><use href="#areas" x="129" y="298" width="128" height="128" style="--a1:#ff5a00;--a2:#ffe800;--a3:#40ff20;--s1:#ffcc00;--s2:#98ff00;--s3:#40ff20"/></g><rect x="258" y="298" width="128" height="128" fill="#030303"/><g filter="url(#tgrain)"><use href="#plant" x="258" y="298" width="128" height="128" style="filter:brightness(1.35)"/></g><g filter="url(#tgrainc)"><use href="#areas" x="258" y="298" width="128" height="128" style="--a1:#ffc400;--a2:#ff4a00;--a3:#ffd800;--s1:#f4f000;--s2:#ffcc00;--s3:#98ff00"/></g><rect x="0" y="447" width="128" height="128" fill="#030303"/><g filter="url(#tgrain)"><use href="#plant" x="0" y="447" width="128" height="128" style="filter:brightness(1.45)"/></g><g filter="url(#tgrainc)"><use href="#areas" x="0" y="447" width="128" height="128" style="--a1:#ffc000;--a2:#ff4800;--a3:#ffe000;--s1:#f4f000;--s2:#ffcc00;--s3:#98ff00"/></g><rect x="129" y="447" width="128" height="128" fill="#030303"/><g filter="url(#tgrain)"><use href="#plant" x="129" y="447" width="128" height="128" style="filter:brightness(1.4)"/></g><g filter="url(#tgrainc)"><use href="#areas" x="129" y="447" width="128" height="128" style="--a1:#ffe000;--a2:#ff5a00;--a3:#f0f000;--s1:#98ff00;--s2:#ffcc00;--s3:#98ff00"/></g><rect x="258" y="447" width="128" height="128" fill="#030303"/><g filter="url(#tgrain)"><use href="#plant" x="258" y="447" width="128" height="128" style="filter:brightness(1.25)"/></g><g filter="url(#tgrainc)"><use href="#areas" x="258" y="447" width="128" height="128" style="--a1:#ff6000;--a2:#ff9800;--a3:#d0f000;--s1:#ffcc00;--s2:#f4f000;--s3:#60ff00"/></g><g font-family="Liberation Sans, sans-serif" font-size="10.200" fill="#000" text-anchor="middle"><text x="64" y="142">Fo</text><text x="193" y="142">Fm</text><text x="322" y="142">Fp</text><text x="64" y="291">Fm_L1</text><text x="193" y="291">Fm_L2</text><text x="322" y="291">Fm_L3</text><text x="64" y="440">Fm_L4</text><text x="193" y="440">Fm_Lss</text><text x="322" y="440">Fm_D1</text></g><path d="M128.500,128V148M257.500,128V148M128.500,277V297M257.500,277V297M128.500,426V446M257.500,426V446" stroke="#c8c8c8" stroke-width="1"/></svg>
<div class="a" style="left:702px;top:83px;width:130px;height:150px;border:1px dotted #000"></div>
<div class="a" style="left:1193px;top:84px;width:17px;height:558px;background:linear-gradient(90deg,#e8e8e8,#f4f4f4 8px,#ededed)"></div>
<svg class="a" style="left:1193px;top:84px" width="17" height="558" viewBox="0 0 17 558">
<path d="M4.500,12L8.500,7.500L12.500,12Z" fill="#404040"/><path d="M4.500,545L8.500,549.500L12.500,545Z" fill="#404040"/>
<rect x="1.500" y="18.500" width="14" height="14" rx="1.500" fill="url(#sbg)" stroke="#979797"/>
<defs><linearGradient id="sbg" x1="0" x2="1"><stop offset="0" stop-color="#f4f4f4"/><stop offset=".5" stop-color="#e2e2e2"/><stop offset="1" stop-color="#d2d2d2"/></linearGradient></defs>
</svg>
<!-- formula icon -->
<svg class="a" style="left:712px;top:652px" width="16" height="15" viewBox="0 0 16 15">
 <rect x=".5" y=".5" width="15" height="14" fill="#fff" stroke="#000"/>
 <rect x="1" y="1" width="14" height="6" fill="#e8e800"/>
 <path d="M3.500,1.500v4.500h3v-4.500M9,2v4h4v-4" fill="#38d020" stroke="#38d020" stroke-width="1"/>
 <path d="M1,7.500h14" stroke="#000"/>
 <path d="M2,10l2,2.500l2.500,-3l2.500,3l2.500,-3l2.500,3" fill="none" stroke="#2020d8" stroke-width="1"/>
 <path d="M2,12.500l2,-2.500l2.500,3l2.500,-3l2.500,3l2.500,-3" fill="none" stroke="#e02020" stroke-width="1"/>
</svg>
<div class="a" style="left:744px;top:649px;width:441px;height:31px;border:1px solid;border-color:#a0a0a0 #fff #fff #a0a0a0"></div>
<div class="t" style="left:744px;top:657px;width:441px;text-align:center;font-size:14px;letter-spacing:.36px;font-weight:bold">Fo=average(frame,startFo,endFo)</div>

<!-- Display Mode -->
<div class="grp" style="left:713px;top:687px;width:137px;height:81px"></div>
<div class="leg" style="left:720px;top:681px;font-size:13.500px">Display Mode</div>
<div class="rb" style="left:722px;top:702px"></div><div class="a" style="left:726px;top:706px;width:4px;height:4px;border-radius:50%;background:#000"></div>
<div class="rb" style="left:722px;top:725px"></div>
<div class="rb" style="left:722px;top:748px"></div>
<div class="t" style="left:739px;top:702px;font-size:13.500px">Color by Pixel</div>
<div class="t" style="left:739px;top:725px;font-size:13.500px">Color by Object</div>
<div class="t" style="left:739px;top:748px;font-size:13.500px">Color By Avg</div>

<!-- Options -->
<div class="grp" style="left:713px;top:784px;width:137px;height:145px"></div>
<div class="leg" style="left:720px;top:778px;font-size:13.500px">Options</div>
<div class="cb" style="left:717px;top:797px"></div>
<div class="cb" style="left:717px;top:824px"></div>
<div class="cb" style="left:717px;top:851px"></div>
<div class="cb dis" style="left:717px;top:879px"></div>
<div class="cb dis" style="left:717px;top:908px"></div>
<svg class="a" style="left:717px;top:797px" width="13" height="13" viewBox="0 0 13 13"><path d="M3,6l2.500,2.500l4.500,-4.500" fill="none" stroke="#000" stroke-width="2"/></svg>
<svg class="a" style="left:717px;top:824px" width="13" height="13" viewBox="0 0 13 13"><path d="M3,6l2.500,2.500l4.500,-4.500" fill="none" stroke="#000" stroke-width="2"/></svg>
<div class="t" style="left:735px;top:798px;font-size:13.500px">Show Number</div>
<div class="t" style="left:735px;top:824px;font-size:13.500px">Histogram</div>
<div class="t" style="left:735px;top:851px;font-size:13.500px">Checkpoint</div>
<div class="t gray" style="left:735px;top:879px;font-size:13.500px;text-shadow:1px 1px 0 #fff">Obj. Calibration</div>
<div class="t gray" style="left:735px;top:908px;font-size:13.500px;text-shadow:1px 1px 0 #fff">Chlorophyll</div>

<!-- Value Range -->
<div class="grp" style="left:859px;top:688px;width:177px;height:176px"></div>
<div class="leg" style="left:866px;top:682px;font-size:13.500px">Value Range</div>
<div class="cb" style="left:889px;top:705px"></div>
<div class="cb" style="left:889px;top:733px"></div>
<div class="t" style="left:907px;top:705px;font-size:13.500px">Group Color</div>
<div class="t" style="left:907px;top:733px;font-size:13.500px">Manual Color</div>
<div class="t gray" style="left:874px;top:759px;font-size:13px">Limit</div>
<div class="t gray" style="left:907px;top:759px;font-size:13px">218.2</div>
<div class="t gray" style="left:869px;top:786px;font-size:13px">Max</div>
<div class="inp" style="left:901px;top:781px;width:118px;height:23px"></div>
<div class="t" style="left:904px;top:786px;font-size:13px;color:#808080">217.44</div>
<div class="t gray" style="left:869px;top:819px;font-size:13px">Min</div>
<div class="inp" style="left:902px;top:813px;width:118px;height:23px"></div>
<div class="t" style="left:905px;top:818px;font-size:13px;color:#808080">23.7</div>
<div class="t gray" style="left:869px;top:842px;font-size:13px">Limit</div>
<div class="t gray" style="left:909px;top:842px;font-size:13px">23.7</div>

<!-- Numeric -->
<div class="grp" style="left:1046px;top:688px;width:138px;height:127px"></div>
<div class="leg" style="left:1053px;top:682px;font-size:13.500px">Numeric</div>
<div class="btn" style="left:1053px;top:698px;width:121px;height:24px;font-size:13.500px;line-height:21px">Add Checkpoint</div>
<div class="btn" style="left:1053px;top:728px;width:121px;height:24px;font-size:13.500px;line-height:21px">Delete Checkpoint</div>
<div class="btn" style="left:1053px;top:757px;width:121px;height:24px;font-size:13.500px;line-height:21px">Edit Checkpoint</div>
<div class="btn" style="left:1054px;top:787px;width:55px;height:24px;font-size:13.500px;line-height:21px">Save</div>
<div class="btn" style="left:1116px;top:787px;width:56px;height:24px;font-size:13.500px;line-height:21px">Load</div>
<div class="btn" style="left:1052px;top:826px;width:126px;height:38px"></div>
<svg class="a" style="left:1072px;top:835px" width="13" height="18" viewBox="0 0 13 18">
 <path d="M4.500,1.500h4v4.500c2.500,1.200 3.800,3.200 3.800,5.500c0,3 -2.600,5 -5.800,5s-5.800,-2 -5.800,-5c0,-2.300 1.300,-4.300 3.800,-5.500z" fill="#e8e8ff" stroke="#2828c0" stroke-width="1"/>
 <path d="M1.500,10.500c1.500,-1 3,-1 5,0s3.500,1 5,0c.3,3.200 -2.200,5.200 -5,5.200s-5.300,-2 -5,-5.200z" fill="#2030e8"/>
 <path d="M3.500,1.500h6" stroke="#2828c0" stroke-width="1.400"/>
</svg>
<div class="t" style="left:1091px;top:838px;font-size:14px;letter-spacing:.25px;font-weight:bold">Analyze</div>

</body></html>
